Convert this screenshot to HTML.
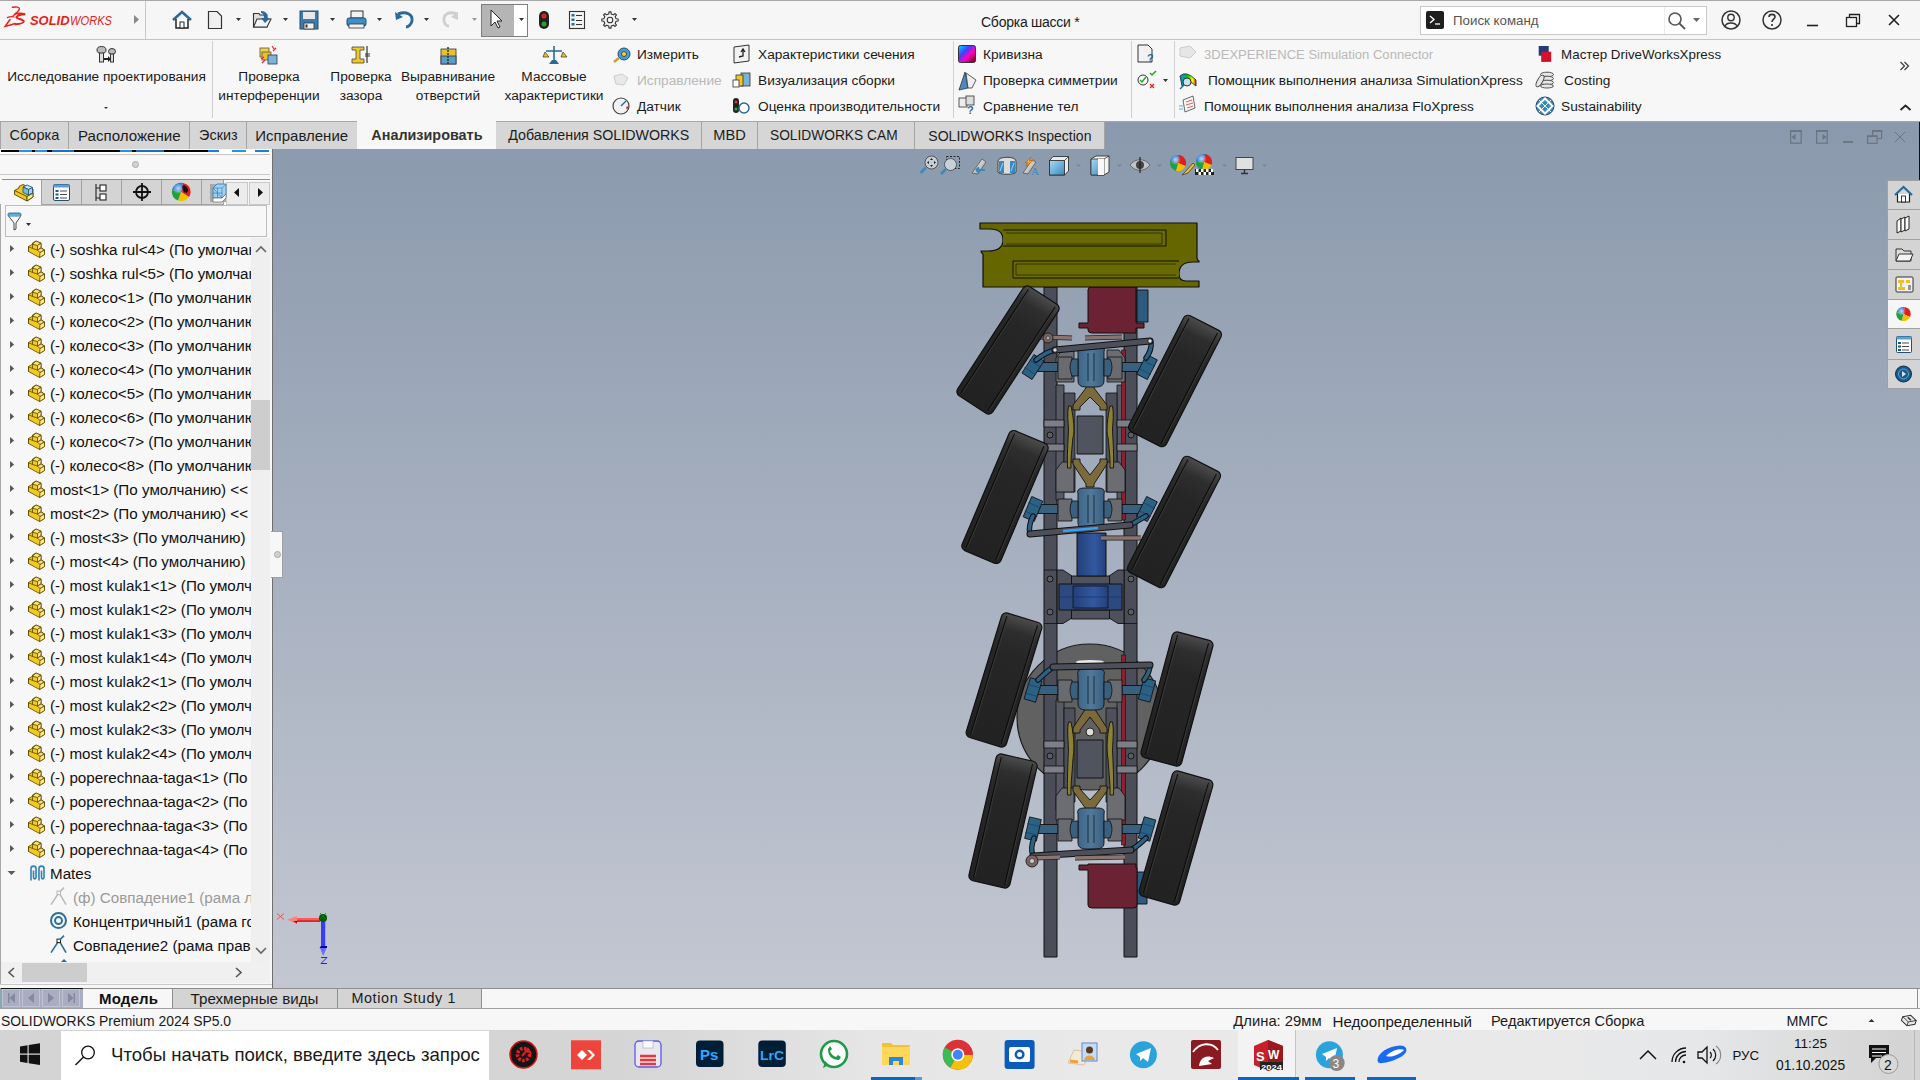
<!DOCTYPE html>
<html><head><meta charset="utf-8">
<style>
*{margin:0;padding:0;box-sizing:border-box}
html,body{width:1920px;height:1080px;overflow:hidden;background:#f7f7f7;font-family:"Liberation Sans",sans-serif;color:#1a1a1a}
.a{position:absolute}
.t{position:absolute;white-space:nowrap;line-height:1}
#titlebar{left:0;top:0;width:1920px;height:40px;background:#f6f6f6;border-top:1px solid #a8a8a8;border-bottom:1px solid #c4c4c4}
#ribbon{left:0;top:40px;width:1920px;height:81px;background:#f7f7f7}
#vp{left:272px;top:121px;width:1648px;height:867px;background:linear-gradient(#8a99ad,#c3c7d2)}
#tabs{left:0;top:121px;height:28px}
.tab{position:absolute;top:0;height:28px;background:#d6d6d6;border:1px solid #a3a3a3;border-bottom:none;font-size:15px;color:#1c1c1c;padding-top:7px;text-align:center}
#panel{left:0;top:149px;width:272px;height:839px;background:#f7f7f7}
#btabs{left:0;top:988px;width:1920px;height:21px;background:#f7f7f7;border-top:1px solid #9a9a9a;border-bottom:1px solid #8c8c8c}
#status{left:0;top:1009px;width:1920px;height:21px;background:#f7f7f7}
#taskbar{left:0;top:1030px;width:1920px;height:50px;background:#d4d4d4}
.rt{font-size:13.7px;color:#1a1a1a}
.tree{font-size:15.4px;color:#111}
</style></head><body>
<div id="titlebar" class="a"></div>
<!-- TITLEBAR CONTENT -->
<div class="a" style="left:145px;top:1px;width:1px;height:38px;background:#c8c8c8"></div>
<svg class="a" style="left:0;top:0" width="150" height="40">
 <g fill="none" stroke="#e2231a" stroke-linecap="round">
  <path d="M12.3 7.2 C16 6.6 19.5 7 19.4 8.6 C19.2 10.5 16 13.5 13.2 15.8" stroke-width="1.4"/>
  <path d="M7.3 17.6 C9.5 16.6 12.5 16.4 14.2 17" stroke-width="1.2"/>
  <path d="M10 19.5 L5.2 26.3 C9 25.5 12.5 24.5 15 23.5" stroke-width="1.5"/>
  <path d="M15.5 13.6 C19 13.2 23 13.4 25.2 14.3 C21 14.6 17.5 15.5 16.5 17 C15.5 18.5 24 19.5 23.8 21.5 C23.6 23.5 19 24 15.5 24.3" stroke-width="1.9"/>
 </g>
 <text x="30" y="24.6" font-family="Liberation Sans" font-weight="bold" font-style="italic" font-size="12.3" fill="#e2231a" textLength="39.5" lengthAdjust="spacingAndGlyphs">SOLID</text>
 <text x="70" y="24.6" font-family="Liberation Sans" font-style="italic" font-size="12.3" fill="#e2231a" textLength="42" lengthAdjust="spacingAndGlyphs">WORKS</text>
 <path d="M134 15 L139 19.5 L134 24 Z" fill="#8a8a8a"/>
</svg>
<svg class="a" style="left:160px;top:0" width="500" height="40">
 <!-- home -->
 <path d="M13 20 L22 12 L31 20" fill="none" stroke="#2a6a98" stroke-width="2.5"/>
 <path d="M16 19 L16 28 L28 28 L28 19" fill="#fff" stroke="#222" stroke-width="1.5"/>
 <rect x="20" y="22" width="4" height="6" fill="#fff" stroke="#222" stroke-width="1"/>
 <!-- new -->
 <path d="M48.5 11.5 L57 11.5 L61.5 16 L61.5 28.5 L48.5 28.5 Z" fill="#f0f0f0" stroke="#333" stroke-width="1.2"/>
 <path d="M76 18 L81 18 L78.5 21 Z" fill="#333"/>
 <!-- open -->
 <path d="M93.5 13.5 L99 13.5 L100 15 L107 15 L107 27 L93.5 27 Z" fill="#ddd" stroke="#333" stroke-width="1.1"/>
 <path d="M93.5 27 L97 19 L111 19 L107 27 Z" fill="#f4f4f4" stroke="#333" stroke-width="1.1"/>
 <path d="M101 11 C106 11 108 14 107 18 L110 18 L105 23 L101 18 L104 18 C104 15 103 13 101 13 Z" fill="#2a6a98"/>
 <path d="M123 18 L128 18 L125.5 21 Z" fill="#333"/>
 <!-- save -->
 <rect x="140" y="11" width="18" height="18" fill="#3c7bab" stroke="#1f4f75" stroke-width="1"/>
 <rect x="143" y="12" width="12" height="7" fill="#e8e8e8"/>
 <rect x="144" y="23" width="10" height="6" fill="#f0f0f0" stroke="#333" stroke-width="0.8"/>
 <rect x="145.5" y="24.5" width="2" height="3" fill="#333"/>
 <path d="M170 18 L175 18 L172.5 21 Z" fill="#333"/>
 <!-- print -->
 <rect x="191" y="11" width="12" height="7" fill="#f2f2f2" stroke="#333" stroke-width="1"/>
 <rect x="187" y="18" width="19" height="8" rx="2" fill="#3c8fc8" stroke="#1f4f75" stroke-width="1"/>
 <rect x="189" y="24" width="15" height="4" fill="#f2f2f2" stroke="#333" stroke-width="0.8"/>
 <path d="M217 18 L222 18 L219.5 21 Z" fill="#333"/>
 <!-- undo -->
 <path d="M238 14 C246 11 253 14 252 21 C251 25 248 27 246 27" fill="none" stroke="#2a6a98" stroke-width="3"/>
 <path d="M235 12 L236 20 L243 17 Z" fill="#2a6a98"/>
 <path d="M264 18 L269 18 L266.5 21 Z" fill="#333"/>
 <!-- redo -->
 <path d="M297 14 C289 11 283 14 284 21 C285 25 287 26 289 26" fill="none" stroke="#cfcfcf" stroke-width="3"/>
 <path d="M298 12 L298 20 L291 17 Z" fill="#cfcfcf"/>
 <path d="M312 18 L317 18 L314.5 21 Z" fill="#999"/>
 <!-- select -->
 <rect x="321.5" y="4.5" width="46" height="32" fill="#fff" stroke="#7e7e7e"/>
 <rect x="322" y="5" width="32" height="31" fill="#b5b5b5"/>
 <path d="M331 10 L331 26 L335 22 L338 28 L340 27 L337 21 L342 21 Z" fill="#fff" stroke="#222" stroke-width="1"/>
 <path d="M359 18 L364 18 L361.5 21 Z" fill="#333"/>
 <!-- traffic -->
 <rect x="379" y="11" width="10" height="18" rx="5" fill="#222"/>
 <circle cx="384" cy="16" r="2.5" fill="#d22"/>
 <circle cx="384" cy="24" r="2.5" fill="#2a2"/>
 <!-- list -->
 <rect x="409.5" y="11.5" width="15" height="17" fill="#f4f4f4" stroke="#333" stroke-width="1.1"/>
 <rect x="411.5" y="14" width="3" height="2.5" fill="#2a6a98"/><rect x="411.5" y="18.5" width="3" height="2.5" fill="#2a6a98"/><rect x="411.5" y="23" width="3" height="2.5" fill="#2a6a98"/>
 <path d="M416 15.5 H422 M416 20.5 H422 M416 24.5 H422" stroke="#333" stroke-width="1"/>
 <!-- gear -->
 <path d="M456.08 18.77 L458.14 19.02 L458.14 20.98 L456.08 21.23 L455.17 23.43 L456.45 25.06 L455.06 26.45 L453.43 25.17 L451.23 26.08 L450.98 28.14 L449.02 28.14 L448.77 26.08 L446.57 25.17 L444.94 26.45 L443.55 25.06 L444.83 23.43 L443.92 21.23 L441.86 20.98 L441.86 19.02 L443.92 18.77 L444.83 16.57 L443.55 14.94 L444.94 13.55 L446.57 14.83 L448.77 13.92 L449.02 11.86 L450.98 11.86 L451.23 13.92 L453.43 14.83 L455.06 13.55 L456.45 14.94 L455.17 16.57 Z" fill="#f6f6f6" stroke="#333" stroke-width="1.1" stroke-linejoin="round"/><circle cx="450" cy="20" r="2.8" fill="#f6f6f6" stroke="#333" stroke-width="1.1"/>
 <path d="M472 18 L477 18 L474.5 21 Z" fill="#333"/>
</svg>
<div class="t" style="left:981px;top:15px;font-size:14px;letter-spacing:-0.25px;color:#1a1a1a">Сборка шасси *</div>
<!-- search box -->
<div class="a" style="left:1420px;top:6px;width:287px;height:29px;background:#fff;border:1px solid #c9c9c9"></div>
<div class="a" style="left:1664px;top:7px;width:1px;height:27px;background:#ececec"></div>
<div class="a" style="left:1426px;top:11px;width:18px;height:18px;background:#1f1f1f;border-radius:2px"></div>
<svg class="a" style="left:1426px;top:11px" width="18" height="18"><path d="M4 5 L8 8.5 L4 12" fill="none" stroke="#fff" stroke-width="1.4"/><path d="M9 13 H14" stroke="#fff" stroke-width="1.3"/></svg>
<div class="t" style="left:1453px;top:14px;font-size:13.3px;color:#555">Поиск команд</div>
<svg class="a" style="left:1660px;top:8px" width="260" height="28">
 <circle cx="15" cy="11" r="6" fill="none" stroke="#555" stroke-width="1.6"/><path d="M19 15 L25 21" stroke="#555" stroke-width="1.8"/>
 <path d="M33 10 L40 10 L36.5 14 Z" fill="#666"/>
 <circle cx="71" cy="12" r="9" fill="none" stroke="#333" stroke-width="1.5"/><circle cx="71" cy="9.5" r="3.2" fill="none" stroke="#333" stroke-width="1.4"/><path d="M65 18 C67 14 75 14 77 18" fill="none" stroke="#333" stroke-width="1.4"/>
 <circle cx="112" cy="12" r="9" fill="none" stroke="#333" stroke-width="1.5"/>
 <path d="M109 9 C109 5.5 115 5.5 115 9 C115 11 112 11.5 112 14" fill="none" stroke="#333" stroke-width="1.6"/><circle cx="112" cy="17" r="1.1" fill="#333"/>
 <path d="M147 17.5 H158" stroke="#222" stroke-width="1.6"/>
 <rect x="186.5" y="9.5" width="10" height="9" fill="none" stroke="#222" stroke-width="1.3"/><path d="M189.5 9.5 V6.5 H199.5 V15.5 H196.5" fill="none" stroke="#222" stroke-width="1.3"/>
 <path d="M229 7 L239 17 M239 7 L229 17" stroke="#222" stroke-width="1.6"/>
</svg>

<div id="ribbon" class="a"></div>
<div class="a" style="left:212px;top:41px;width:1px;height:77px;background:#d0d0d0"></div>
<div class="a" style="left:953px;top:41px;width:1px;height:77px;background:#d0d0d0"></div>
<div class="a" style="left:1131px;top:41px;width:1px;height:77px;background:#d0d0d0"></div>
<div class="a" style="left:1174px;top:41px;width:1px;height:77px;background:#d0d0d0"></div>
<div class="t" style="left:1.5px;top:69.9px;width:210px;text-align:center;font-size:13.7px;color:#1a1a1a">Исследование проектирования</div>
<div class="t" style="left:169.0px;top:69.9px;width:200px;text-align:center;font-size:13.7px;color:#1a1a1a">Проверка</div>
<div class="t" style="left:169.0px;top:88.9px;width:200px;text-align:center;font-size:13.7px;color:#1a1a1a">интерференции</div>
<div class="t" style="left:261.0px;top:69.9px;width:200px;text-align:center;font-size:13.7px;color:#1a1a1a">Проверка</div>
<div class="t" style="left:261.0px;top:88.9px;width:200px;text-align:center;font-size:13.7px;color:#1a1a1a">зазора</div>
<div class="t" style="left:348.0px;top:69.9px;width:200px;text-align:center;font-size:13.7px;color:#1a1a1a">Выравнивание</div>
<div class="t" style="left:348.0px;top:88.9px;width:200px;text-align:center;font-size:13.7px;color:#1a1a1a">отверстий</div>
<div class="t" style="left:454.0px;top:69.9px;width:200px;text-align:center;font-size:13.7px;color:#1a1a1a">Массовые</div>
<div class="t" style="left:454.0px;top:88.9px;width:200px;text-align:center;font-size:13.7px;color:#1a1a1a">характеристики</div>
<div class="t" style="left:637px;top:48.1px;font-size:13.7px;color:#1a1a1a;">Измерить</div>
<div class="t" style="left:637px;top:74.1px;font-size:13.7px;color:#b9b9b9;">Исправление</div>
<div class="t" style="left:637px;top:100.1px;font-size:13.7px;color:#1a1a1a;">Датчик</div>
<div class="t" style="left:758px;top:48.1px;font-size:13.7px;color:#1a1a1a;">Характеристики сечения</div>
<div class="t" style="left:758px;top:74.1px;font-size:13.7px;color:#1a1a1a;">Визуализация сборки</div>
<div class="t" style="left:758px;top:100.1px;font-size:13.7px;color:#1a1a1a;">Оценка производительности</div>
<div class="t" style="left:983px;top:48.1px;font-size:13.7px;color:#1a1a1a;">Кривизна</div>
<div class="t" style="left:983px;top:74.1px;font-size:13.7px;color:#1a1a1a;">Проверка симметрии</div>
<div class="t" style="left:983px;top:100.1px;font-size:13.7px;color:#1a1a1a;">Сравнение тел</div>
<div class="t" style="left:1204px;top:48.1px;font-size:13.05px;color:#b9b9b9;">3DEXPERIENCE Simulation Connector</div>
<div class="t" style="left:1208px;top:74.1px;font-size:13.7px;color:#1a1a1a;">Помощник выполнения анализа SimulationXpress</div>
<div class="t" style="left:1204px;top:100.1px;font-size:13.7px;color:#1a1a1a;">Помощник выполнения анализа FloXpress</div>
<div class="t" style="left:1561px;top:48.1px;font-size:13.35px;color:#1a1a1a;">Мастер DriveWorksXpress</div>
<div class="t" style="left:1564px;top:74.1px;font-size:13.7px;color:#1a1a1a;">Costing</div>
<div class="t" style="left:1561px;top:100.1px;font-size:13.7px;color:#1a1a1a;">Sustainability</div>
<svg class="a" style="left:0;top:40px" width="1920" height="81">
 <!-- design study bolts -->
 <g stroke="#333" stroke-width="1" fill="#bbb">
  <ellipse cx="101.5" cy="10" rx="4.5" ry="3.5"/><rect x="99.5" y="13" width="4" height="9" fill="#ddd"/>
  <ellipse cx="112" cy="11.5" rx="3.5" ry="3"/><rect x="110.5" y="14" width="3" height="8" fill="#ddd"/>
 </g>
 <path d="M104 18 L108 18 L108 16 L111 19 L108 22 L108 20 L104 20 Z" fill="#222"/>
 <path d="M104 67 L108 67 L106 69 Z" fill="#333"/>
 <!-- interference -->
 <rect x="260" y="8" width="9" height="9" fill="#f3d23c" stroke="#555" stroke-width="0.8"/>
 <rect x="262" y="12" width="9" height="8" fill="#e8c22a" stroke="#555" stroke-width="0.8"/>
 <rect x="268" y="15" width="9" height="9" fill="#7ab4d8" stroke="#335" stroke-width="0.8"/>
 <path d="M272 6 L274 9 M276 8 L273 11 M261 19 L264 17 M262 23 L265 20" stroke="#e23" stroke-width="1.2"/>
 <!-- clearance -->
 <path d="M352 7 H364 V10 H360 V19 H364 V23 H352 V19 H356 V10 H352 Z" fill="#f0c820" stroke="#444" stroke-width="0.8"/>
 <path d="M367 6 V23 M365 14 H370 M365 16 H370" stroke="#333" stroke-width="1.2"/>
 <!-- align holes -->
 <rect x="441" y="9" width="15" height="15" fill="#e8c22a" stroke="#333" stroke-width="0.8"/>
 <rect x="441" y="16" width="15" height="8" fill="#5c9cc8" stroke="#333" stroke-width="0.8"/>
 <path d="M448 7 V25" stroke="#333" stroke-width="1.5" stroke-dasharray="2 1"/>
 <!-- mass -->
 <path d="M554 6 V22 M546 11 H562" stroke="#2b6a96" stroke-width="1.6"/>
 <path d="M545 12 L543 17 H549 Z M563 12 L561 17 H567 Z" fill="#e8c22a" stroke="#333" stroke-width="0.7"/>
 <path d="M549 24 H559 L556 20 H552 Z" fill="#2b6a96"/>
 <!-- measure -->
 <circle cx="624" cy="14" r="6" fill="#4b9ad0" stroke="#1e4f75" stroke-width="1"/><circle cx="624" cy="14" r="2.5" fill="#f0d040" stroke="#333" stroke-width="0.8"/>
 <path d="M619 18 L614 22" stroke="#c8a030" stroke-width="2.5"/>
 <!-- repair gray -->
 <path d="M614 36 L622 34 L628 38 L624 45 L616 44 Z" fill="#e8e8e8" stroke="#ccc"/>
 <!-- sensor -->
 <circle cx="621" cy="66" r="8" fill="#f2f2f2" stroke="#444" stroke-width="1.2"/><path d="M621 66 L626 61" stroke="#2b6a96" stroke-width="1.5"/><path d="M626 67 L629 66 L627 70 Z" fill="#d22"/>
 <!-- section props -->
 <path d="M734 7 L749 5 L749 21 L734 23 Z" fill="#f2f2f2" stroke="#333" stroke-width="1"/><path d="M739 17 L743 16 L743 10 M741 12 L743 9 L745 12" fill="none" stroke="#222" stroke-width="1.3"/>
 <!-- asm viz -->
 <rect x="741" y="33" width="9" height="13" fill="#7ab4d8" stroke="#333" stroke-width="0.8"/><rect x="736" y="35" width="7" height="11" fill="#f0c820" stroke="#333" stroke-width="0.8"/><rect x="733" y="40" width="6" height="7" fill="#fff" stroke="#333" stroke-width="0.8"/>
 <!-- perf eval -->
 <rect x="733" y="58" width="6" height="15" rx="3" fill="#222"/><circle cx="736" cy="62" r="1.5" fill="#d33"/><circle cx="736" cy="69" r="1.5" fill="#3a3"/>
 <circle cx="744" cy="68" r="5" fill="#fff" stroke="#2b6a96" stroke-width="1.5"/>
 <!-- curvature -->
 <defs><linearGradient id="rb" x1="0" y1="0" x2="1" y2="1"><stop offset="0" stop-color="#00e0ff"/><stop offset="0.35" stop-color="#4040ff"/><stop offset="0.6" stop-color="#ff00c0"/><stop offset="1" stop-color="#600"/></linearGradient>
 <linearGradient id="rb2" x1="0" y1="0" x2="1" y2="0"><stop offset="0" stop-color="#08f"/><stop offset="0.5" stop-color="#0c0"/><stop offset="0.8" stop-color="#ff0"/><stop offset="1" stop-color="#f00"/></linearGradient></defs>
 <rect x="958.5" y="5.5" width="17" height="17" rx="2" fill="url(#rb)" stroke="#333" stroke-width="1"/>
 <!-- symmetry -->
 <path d="M959 50 L965 32 L968 48 Z" fill="#4a8ac0" stroke="#333" stroke-width="0.8"/><path d="M966 33 L976 40 L972 48 L968 48 Z" fill="#eee" stroke="#333" stroke-width="0.8"/>
 <!-- compare bodies -->
 <rect x="959" y="58" width="8" height="9" fill="#eee" stroke="#333" stroke-width="0.8"/><rect x="966" y="56" width="8" height="9" fill="#ddd" stroke="#333" stroke-width="0.8"/><text x="967" y="74" font-size="11" font-weight="bold" fill="#2b6a96" font-family="Liberation Sans">?</text>
 <!-- col4 -->
 <path d="M1138 5 H1148 L1152 9 V22 H1138 Z" fill="#f2f2f2" stroke="#333" stroke-width="1"/><text x="1147" y="22" font-size="11" font-weight="bold" fill="#2b6a96" font-family="Liberation Sans">?</text>
 <circle cx="1143" cy="40" r="5" fill="none" stroke="#333" stroke-width="1"/><path d="M1140 40 L1142 42 L1146 37" stroke="#2a2" stroke-width="1.5" fill="none"/><path d="M1150 33 L1152 35 L1156 31" stroke="#2a2" stroke-width="1.5" fill="none"/><path d="M1150 44 L1154 48 M1154 44 L1150 48" stroke="#d22" stroke-width="1.3"/>
 <path d="M1163 39 L1168 39 L1165.5 42 Z" fill="#333"/>
 <!-- col5 -->
 <path d="M1180 8 L1190 6 L1196 12 L1190 18 L1180 16 Z" fill="#e6e6e6" stroke="#ccc"/>
 <path d="M1180 36 Q1186 30 1196 40 L1196 46 Q1188 38 1182 46 Z" fill="url(#rb2)" stroke="#222" stroke-width="0.8"/><circle cx="1187" cy="42" r="4" fill="#cde" stroke="#333" stroke-width="1"/><path d="M1184 45 L1180 49" stroke="#2b6a96" stroke-width="1.5"/>
 <path d="M1183 60 L1193 56 L1195 68 L1185 72 Z" fill="#f6f6f6" stroke="#444" stroke-width="0.8"/><path d="M1186 62 L1192 60 M1186 65 L1193 63 M1187 68 L1193 66" stroke="#d33" stroke-width="0.8"/><path d="M1179 66 H1183 M1179 69 H1183" stroke="#3a9ad0" stroke-width="0.8"/>
 <!-- col6 -->
 <rect x="1538.7" y="6" width="10" height="9.7" fill="#253a7a"/><rect x="1541.2" y="11.7" width="10" height="10.2" fill="#d5102a"/>
 <g fill="#e8e8e8" stroke="#444" stroke-width="0.9"><ellipse cx="1547" cy="34.5" rx="6.5" ry="2.3"/><ellipse cx="1547" cy="38.5" rx="6.5" ry="2.3"/><ellipse cx="1547" cy="42.5" rx="6.5" ry="2.3"/><ellipse cx="1547" cy="46" rx="6.5" ry="2"/><ellipse cx="1540" cy="41" rx="2.6" ry="6.5" transform="rotate(30 1540 41)"/></g>
 <circle cx="1545" cy="66" r="9" fill="#3d88b8" stroke="#1a4a6a" stroke-width="1"/><path d="M1545 58.5 L1552.5 66 L1545 73.5 L1537.5 66 Z" fill="none" stroke="#fff" stroke-width="2"/><path d="M1539 60 L1551 72 M1551 60 L1539 72" stroke="#fff" stroke-width="0.9"/>
 <!-- right chevrons -->
 <path d="M1900.5 22 L1904.5 26 L1900.5 30 M1904.5 22 L1908.5 26 L1904.5 30" fill="none" stroke="#333" stroke-width="1.1"/>
 <path d="M1900.5 70 L1905.5 65.5 L1910.5 70" fill="none" stroke="#222" stroke-width="1.7"/>
</svg>

<div id="vp" class="a"></div>
<div class="a" style="left:272px;top:121px;width:1648px;height:867px;background:linear-gradient(#8a99ad,#c3c7d2)"></div>
<div class="a" style="left:272px;top:149px;width:1px;height:839px;background:#6e6e6e"></div>
<div class="a" style="left:1919px;top:122px;width:1px;height:58px;background:#111"></div>
<svg class="a" style="left:272px;top:121px" width="1648" height="867">
 <g transform="translate(-272,-121)">
 <!-- window controls -->
 <g fill="none" stroke="#6b7482" stroke-width="1.2">
  <rect x="1790.6" y="130.8" width="10.6" height="12.4"/><rect x="1816.6" y="130.8" width="10.6" height="12.4"/>
  <rect x="1867.6" y="136" width="9.5" height="7.3"/><path d="M1872.6 135.5 V130.8 H1881.6 V138.5 H1877.5"/>
  <path d="M1895 132 L1905 142 M1905 132 L1895 142" stroke-width="1"/>
 </g>
 <g fill="#6b7482"><rect x="1790" y="130.3" width="11.7" height="1.6"/><rect x="1816" y="130.3" width="11.7" height="1.6"/><rect x="1872" y="130.3" width="10.2" height="1.6"/><rect x="1867" y="135.5" width="10" height="1.6"/>
  <path d="M1795.5 134 L1791.5 137 L1795.5 140 Z"/><path d="M1822.5 134 L1826.5 137 L1822.5 140 Z"/><rect x="1843" y="141" width="10" height="1.8"/></g>
 <!-- triad -->
 <path d="M277 913.5 L284 919.5 M284 913.5 L277 919.5" stroke="#e84848" stroke-width="0.9"/>
 <path d="M296 918 H320 V921.5 H296 Z" fill="#ff5a5a"/><path d="M296 920.5 H320 V921.7 H296 Z" fill="#c00"/>
 <path d="M287 919.8 L297 916 L297 924 Z" fill="#ff8080"/><path d="M293 921 L297 923.5 L297 921 Z" fill="#a00"/>
 <path d="M321 920 H325.2 V947 H321 Z" fill="#3a3aff"/><path d="M321 946 H327 V948 H319.5 Z" fill="#0000a0"/>
 <path d="M320 948 L326.5 948 L323.2 956 Z" fill="#6a6aff"/>
 <circle cx="323" cy="918" r="4" fill="#005a00"/><path d="M320 913 L326 919 M326 913 L320 919" stroke="#0a8a0a" stroke-width="0.8"/>
 <path d="M321 957.5 H327 L321 963.5 H327" fill="none" stroke="#2020ff" stroke-width="1"/>
 </g>
</svg>
<!-- MODEL START -->
<svg class="a" style="left:900px;top:200px" width="360" height="780">
<defs><linearGradient id="tire" x1="0" y1="0" x2="0" y2="1"><stop offset="0" stop-color="#4c4c4c"/><stop offset="0.12" stop-color="#2e2e2e"/><stop offset="0.3" stop-color="#262626"/><stop offset="1" stop-color="#222"/></linearGradient><linearGradient id="motor" x1="0" y1="0" x2="1" y2="0"><stop offset="0" stop-color="#24407a"/><stop offset="0.6" stop-color="#3358a0"/><stop offset="1" stop-color="#24407a"/></linearGradient><linearGradient id="axle" x1="0" y1="0" x2="1" y2="0"><stop offset="0" stop-color="#3d6486"/><stop offset="0.5" stop-color="#50799a"/><stop offset="1" stop-color="#3a5f80"/></linearGradient></defs>
<g transform="translate(-900,-200)" stroke-linejoin="round">
<circle cx="1090" cy="717" r="73" fill="#616161" stroke="#1a1a1a" stroke-width="1.2"/>
<ellipse cx="1090" cy="662" rx="14" ry="2" fill="#e8e8e8"/>
<rect x="1044" y="287" width="13" height="670" fill="#4b4e58" stroke="#101010" stroke-width="1" />
<rect x="1124" y="287" width="13" height="670" fill="#4b4e58" stroke="#101010" stroke-width="1" />
<rect x="1056" y="385" width="8" height="115" fill="#575a64" stroke="#101010" stroke-width="0.8" />
<rect x="1117" y="385" width="8" height="115" fill="#575a64" stroke="#101010" stroke-width="0.8" />
<rect x="1064" y="393" width="11" height="99" fill="#4e515b" stroke="#101010" stroke-width="0.8" />
<rect x="1106" y="393" width="11" height="99" fill="#4e515b" stroke="#101010" stroke-width="0.8" />
<rect x="1056" y="700" width="8" height="110" fill="#575a64" stroke="#101010" stroke-width="0.8" />
<rect x="1117" y="700" width="8" height="110" fill="#575a64" stroke="#101010" stroke-width="0.8" />
<rect x="1064" y="708" width="11" height="94" fill="#4e515b" stroke="#101010" stroke-width="0.8" />
<rect x="1106" y="708" width="11" height="94" fill="#4e515b" stroke="#101010" stroke-width="0.8" />
<rect x="1121.5" y="350" width="4.0" height="170" fill="#8a2030" stroke="#101010" stroke-width="0.6" />
<rect x="1121.5" y="655" width="4.0" height="190" fill="#8a2030" stroke="#101010" stroke-width="0.6" />
<rect x="1044" y="420" width="20" height="7" fill="#7c7f88" stroke="#101010" stroke-width="0.8" />
<rect x="1117" y="420" width="20" height="7" fill="#7c7f88" stroke="#101010" stroke-width="0.8" />
<rect x="1044" y="444" width="20" height="7" fill="#7c7f88" stroke="#101010" stroke-width="0.8" />
<rect x="1117" y="444" width="20" height="7" fill="#7c7f88" stroke="#101010" stroke-width="0.8" />
<rect x="1044" y="741" width="20" height="7" fill="#7c7f88" stroke="#101010" stroke-width="0.8" />
<rect x="1117" y="741" width="20" height="7" fill="#7c7f88" stroke="#101010" stroke-width="0.8" />
<rect x="1044" y="766" width="20" height="7" fill="#7c7f88" stroke="#101010" stroke-width="0.8" />
<rect x="1117" y="766" width="20" height="7" fill="#7c7f88" stroke="#101010" stroke-width="0.8" />
<circle cx="1050" cy="435" r="3" fill="#5a5d66" stroke="#101010" stroke-width="0.9"/>
<circle cx="1131" cy="435" r="3" fill="#5a5d66" stroke="#101010" stroke-width="0.9"/>
<circle cx="1050" cy="756" r="3" fill="#5a5d66" stroke="#101010" stroke-width="0.9"/>
<circle cx="1131" cy="756" r="3" fill="#5a5d66" stroke="#101010" stroke-width="0.9"/>
<circle cx="1050" cy="579" r="3" fill="#5a5d66" stroke="#101010" stroke-width="0.9"/>
<circle cx="1131" cy="579" r="3" fill="#5a5d66" stroke="#101010" stroke-width="0.9"/>
<circle cx="1050" cy="612" r="3" fill="#5a5d66" stroke="#101010" stroke-width="0.9"/>
<circle cx="1131" cy="612" r="3" fill="#5a5d66" stroke="#101010" stroke-width="0.9"/>
<rect x="1077" y="416" width="26" height="38" fill="#50545f" stroke="#101010" stroke-width="1" />
<rect x="1077" y="740" width="26" height="38" fill="#50545f" stroke="#101010" stroke-width="1" />
<path d="M1056 492 L1056 470 L1062 462 L1074 462 L1074 492 Z" fill="#6c6d73" stroke="#101010" stroke-width="0.8"/>
<path d="M1125 492 L1125 470 L1119 462 L1107 462 L1107 492 Z" fill="#6c6d73" stroke="#101010" stroke-width="0.8"/>
<path d="M1056 382 L1056 358 L1062 350 L1074 350 L1074 382 Z" fill="#6c6d73" stroke="#101010" stroke-width="0.8"/>
<path d="M1125 382 L1125 358 L1119 350 L1107 350 L1107 382 Z" fill="#6c6d73" stroke="#101010" stroke-width="0.8"/>
<path d="M1056 820 L1056 796 L1062 788 L1074 788 L1074 820 Z" fill="#6c6d73" stroke="#101010" stroke-width="0.8"/>
<path d="M1125 820 L1125 796 L1119 788 L1107 788 L1107 820 Z" fill="#6c6d73" stroke="#101010" stroke-width="0.8"/>
<path d="M1057 570 L1063 570 L1072 576 L1072 618 L1063 623.5 L1057 623.5 Z" fill="#4e515b" stroke="#101010" stroke-width="0.9"/>
<path d="M1124 570 L1118 570 L1109 576 L1109 618 L1118 623.5 L1124 623.5 Z" fill="#4e515b" stroke="#101010" stroke-width="0.9"/>
<rect x="1071.5" y="576" width="38.0" height="9.5" fill="#50535d" stroke="#101010" stroke-width="0.9" />
<rect x="1071.5" y="610" width="38.0" height="9" fill="#50535d" stroke="#101010" stroke-width="0.9" />
<path d="M1044 570 L1057 570" stroke="#101010" stroke-width="0.8" fill="none"/>
<path d="M1124 570 L1137 570" stroke="#101010" stroke-width="0.8" fill="none"/>
<path d="M1044 623.5 L1057 623.5" stroke="#101010" stroke-width="0.8" fill="none"/>
<path d="M1124 623.5 L1137 623.5" stroke="#101010" stroke-width="0.8" fill="none"/>
<rect x="1077" y="533" width="29" height="43" fill="url(#motor)" stroke="#101010" stroke-width="1" />
<rect x="1059" y="584" width="63" height="26" fill="#2c4a80" stroke="#101010" stroke-width="1" />
<rect x="1073" y="586" width="35" height="22" fill="url(#motor)" stroke="#101010" stroke-width="0.8" />
<path d="M1059 597 L1122 597" stroke="#1a2a50" stroke-width="0.6" fill="none"/>
<path d="M1068.5 406 L1071 406 C1075 424 1074 436 1073 437.0 C1072 448 1070.5 460 1071 468 L1067.5 468 C1067 448 1068.5 436 1068.5 429.0 C1068 421 1067 414 1068.5 406 Z" fill="#8c8232" stroke="#101010" stroke-width="0.9"/>
<path d="M1112.5 406 L1110 406 C1106 424 1107 436 1108 437.0 C1109 448 1110.5 460 1110 468 L1113.5 468 C1114 448 1112.5 436 1112.5 429.0 C1113 421 1114 414 1112.5 406 Z" fill="#8c8232" stroke="#101010" stroke-width="0.9"/>
<path d="M1068.5 722 L1071 722 C1075 740 1074 752 1073 758.5 C1072 775 1070.5 787 1071 795 L1067.5 795 C1067 775 1068.5 752 1068.5 750.5 C1068 737 1067 730 1068.5 722 Z" fill="#8c8232" stroke="#101010" stroke-width="0.9"/>
<path d="M1112.5 722 L1110 722 C1106 740 1107 752 1108 758.5 C1109 775 1110.5 787 1110 795 L1113.5 795 C1114 775 1112.5 752 1112.5 750.5 C1113 737 1114 730 1112.5 722 Z" fill="#8c8232" stroke="#101010" stroke-width="0.9"/>
<path d="M1073 459 L1080 459 L1080 462 L1090 475 L1100 462 L1100 459 L1107 459 L1107 464 L1094 484 L1094 487 L1086 487 L1086 484 L1073 464 Z" fill="#7c6a3c" stroke="#101010" stroke-width="0.9"/>
<path d="M1073 410 L1080 410 L1080 407 L1090 397 L1100 407 L1100 410 L1107 410 L1107 405 L1094 388 L1094 385 L1086 385 L1086 388 L1073 405 Z" fill="#7c6a3c" stroke="#101010" stroke-width="0.9"/>
<path d="M1073 733 L1080 733 L1080 730 L1090 717 L1100 730 L1100 733 L1107 733 L1107 728 L1094 708 L1094 705 L1086 705 L1086 708 L1073 728 Z" fill="#7c6a3c" stroke="#101010" stroke-width="0.9"/>
<path d="M1073 786 L1080 786 L1080 789 L1090 800 L1100 789 L1100 786 L1107 786 L1107 791 L1094 809 L1094 812 L1086 812 L1086 809 L1073 791 Z" fill="#7c6a3c" stroke="#101010" stroke-width="0.9"/>
<circle cx="1090" cy="732" r="4" fill="#ddd" stroke="#222" stroke-width="1"/>
<rect x="1030" y="362.5" width="28" height="9.0" fill="#3a6080" stroke="#101010" stroke-width="0.9" />
<rect x="1122" y="362.5" width="28" height="9.0" fill="#3a6080" stroke="#101010" stroke-width="0.9" />
<circle cx="1035" cy="367" r="2" fill="none" stroke="#101010" stroke-width="0.7"/>
<circle cx="1145" cy="367" r="2" fill="none" stroke="#101010" stroke-width="0.7"/>
<g transform="translate(1033,367) rotate(33)"><rect x="-6" y="-11" width="12" height="22" fill="#2c6186" stroke="#101010" stroke-width="0.8"/><path d="M-7 -4 H7 M-7 5 H7" stroke="#1a3a55" stroke-width="0.6"/></g>
<g transform="translate(1147,367) rotate(27)"><rect x="-6" y="-11" width="12" height="22" fill="#2c6186" stroke="#101010" stroke-width="0.8"/><path d="M-7 -4 H7 M-7 5 H7" stroke="#1a3a55" stroke-width="0.6"/></g>
<rect x="1058" y="357" width="14" height="22" fill="#6a6b70" stroke="#101010" stroke-width="0.8" />
<rect x="1108" y="357" width="14" height="22" fill="#6a6b70" stroke="#101010" stroke-width="0.8" />
<path d="M1078 352 Q1076 346 1084 346 H1098 Q1106 346 1104 352 V381 Q1104 387 1096 387 H1086 Q1078 387 1078 381 Z" fill="url(#axle)" stroke="#101010" stroke-width="0.9"/>
<path d="M1072 359 Q1068 367 1072 376 H1078 V359 Z M1110 359 Q1114 367 1110 376 H1104 V359 Z" fill="#3a6080" stroke="#101010" stroke-width="0.8"/>
<path d="M1088 353 L1088 381" stroke="#101010" stroke-width="0.7" fill="none"/>
<path d="M1094 353 L1094 381" stroke="#101010" stroke-width="0.7" fill="none"/>
<rect x="1030" y="504.5" width="28" height="9.0" fill="#3a6080" stroke="#101010" stroke-width="0.9" />
<rect x="1122" y="504.5" width="28" height="9.0" fill="#3a6080" stroke="#101010" stroke-width="0.9" />
<circle cx="1035" cy="509" r="2" fill="none" stroke="#101010" stroke-width="0.7"/>
<circle cx="1145" cy="509" r="2" fill="none" stroke="#101010" stroke-width="0.7"/>
<g transform="translate(1033,509) rotate(23)"><rect x="-6" y="-11" width="12" height="22" fill="#2c6186" stroke="#101010" stroke-width="0.8"/><path d="M-7 -4 H7 M-7 5 H7" stroke="#1a3a55" stroke-width="0.6"/></g>
<g transform="translate(1147,509) rotate(27)"><rect x="-6" y="-11" width="12" height="22" fill="#2c6186" stroke="#101010" stroke-width="0.8"/><path d="M-7 -4 H7 M-7 5 H7" stroke="#1a3a55" stroke-width="0.6"/></g>
<rect x="1058" y="499" width="14" height="22" fill="#6a6b70" stroke="#101010" stroke-width="0.8" />
<rect x="1108" y="499" width="14" height="22" fill="#6a6b70" stroke="#101010" stroke-width="0.8" />
<path d="M1078 494 Q1076 488 1084 488 H1098 Q1106 488 1104 494 V523 Q1104 529 1096 529 H1086 Q1078 529 1078 523 Z" fill="url(#axle)" stroke="#101010" stroke-width="0.9"/>
<path d="M1072 501 Q1068 509 1072 518 H1078 V501 Z M1110 501 Q1114 509 1110 518 H1104 V501 Z" fill="#3a6080" stroke="#101010" stroke-width="0.8"/>
<path d="M1088 495 L1088 523" stroke="#101010" stroke-width="0.7" fill="none"/>
<path d="M1094 495 L1094 523" stroke="#101010" stroke-width="0.7" fill="none"/>
<rect x="1030" y="685.5" width="28" height="9.0" fill="#3a6080" stroke="#101010" stroke-width="0.9" />
<rect x="1122" y="685.5" width="28" height="9.0" fill="#3a6080" stroke="#101010" stroke-width="0.9" />
<circle cx="1035" cy="690" r="2" fill="none" stroke="#101010" stroke-width="0.7"/>
<circle cx="1145" cy="690" r="2" fill="none" stroke="#101010" stroke-width="0.7"/>
<g transform="translate(1033,690) rotate(17)"><rect x="-6" y="-11" width="12" height="22" fill="#2c6186" stroke="#101010" stroke-width="0.8"/><path d="M-7 -4 H7 M-7 5 H7" stroke="#1a3a55" stroke-width="0.6"/></g>
<g transform="translate(1147,690) rotate(15)"><rect x="-6" y="-11" width="12" height="22" fill="#2c6186" stroke="#101010" stroke-width="0.8"/><path d="M-7 -4 H7 M-7 5 H7" stroke="#1a3a55" stroke-width="0.6"/></g>
<rect x="1058" y="680" width="14" height="22" fill="#6a6b70" stroke="#101010" stroke-width="0.8" />
<rect x="1108" y="680" width="14" height="22" fill="#6a6b70" stroke="#101010" stroke-width="0.8" />
<path d="M1078 675 Q1076 669 1084 669 H1098 Q1106 669 1104 675 V704 Q1104 710 1096 710 H1086 Q1078 710 1078 704 Z" fill="url(#axle)" stroke="#101010" stroke-width="0.9"/>
<path d="M1072 682 Q1068 690 1072 699 H1078 V682 Z M1110 682 Q1114 690 1110 699 H1104 V682 Z" fill="#3a6080" stroke="#101010" stroke-width="0.8"/>
<path d="M1088 676 L1088 704" stroke="#101010" stroke-width="0.7" fill="none"/>
<path d="M1094 676 L1094 704" stroke="#101010" stroke-width="0.7" fill="none"/>
<rect x="1030" y="824.5" width="28" height="9.0" fill="#3a6080" stroke="#101010" stroke-width="0.9" />
<rect x="1122" y="824.5" width="28" height="9.0" fill="#3a6080" stroke="#101010" stroke-width="0.9" />
<circle cx="1035" cy="829" r="2" fill="none" stroke="#101010" stroke-width="0.7"/>
<circle cx="1145" cy="829" r="2" fill="none" stroke="#101010" stroke-width="0.7"/>
<g transform="translate(1033,829) rotate(13)"><rect x="-6" y="-11" width="12" height="22" fill="#2c6186" stroke="#101010" stroke-width="0.8"/><path d="M-7 -4 H7 M-7 5 H7" stroke="#1a3a55" stroke-width="0.6"/></g>
<g transform="translate(1147,829) rotate(16)"><rect x="-6" y="-11" width="12" height="22" fill="#2c6186" stroke="#101010" stroke-width="0.8"/><path d="M-7 -4 H7 M-7 5 H7" stroke="#1a3a55" stroke-width="0.6"/></g>
<rect x="1058" y="819" width="14" height="22" fill="#6a6b70" stroke="#101010" stroke-width="0.8" />
<rect x="1108" y="819" width="14" height="22" fill="#6a6b70" stroke="#101010" stroke-width="0.8" />
<path d="M1078 814 Q1076 808 1084 808 H1098 Q1106 808 1104 814 V843 Q1104 849 1096 849 H1086 Q1078 849 1078 843 Z" fill="url(#axle)" stroke="#101010" stroke-width="0.9"/>
<path d="M1072 821 Q1068 829 1072 838 H1078 V821 Z M1110 821 Q1114 829 1110 838 H1104 V821 Z" fill="#3a6080" stroke="#101010" stroke-width="0.8"/>
<path d="M1088 815 L1088 843" stroke="#101010" stroke-width="0.7" fill="none"/>
<path d="M1094 815 L1094 843" stroke="#101010" stroke-width="0.7" fill="none"/>
<path d="M1036 360 Q1046 352 1055 350" stroke="#101010" stroke-width="5.5" fill="none" stroke-linecap="round"/>
<path d="M1036 360 Q1046 352 1055 350" stroke="#2c6186" stroke-width="3.5" fill="none" stroke-linecap="round"/>
<path d="M1146 358 Q1152 350 1151 342" stroke="#101010" stroke-width="5.5" fill="none" stroke-linecap="round"/>
<path d="M1146 358 Q1152 350 1151 342" stroke="#2c6186" stroke-width="3.5" fill="none" stroke-linecap="round"/>
<path d="M1033 516 Q1028 526 1030 534" stroke="#101010" stroke-width="5.5" fill="none" stroke-linecap="round"/>
<path d="M1033 516 Q1028 526 1030 534" stroke="#2c6186" stroke-width="3.5" fill="none" stroke-linecap="round"/>
<path d="M1146 516 Q1136 522 1130 525" stroke="#101010" stroke-width="5.5" fill="none" stroke-linecap="round"/>
<path d="M1146 516 Q1136 522 1130 525" stroke="#2c6186" stroke-width="3.5" fill="none" stroke-linecap="round"/>
<path d="M1038 680 Q1046 672 1053 667" stroke="#101010" stroke-width="5.5" fill="none" stroke-linecap="round"/>
<path d="M1038 680 Q1046 672 1053 667" stroke="#2c6186" stroke-width="3.5" fill="none" stroke-linecap="round"/>
<path d="M1144 680 Q1150 672 1150 665" stroke="#101010" stroke-width="5.5" fill="none" stroke-linecap="round"/>
<path d="M1144 680 Q1150 672 1150 665" stroke="#2c6186" stroke-width="3.5" fill="none" stroke-linecap="round"/>
<path d="M1034 838 Q1030 848 1033 856" stroke="#101010" stroke-width="5.5" fill="none" stroke-linecap="round"/>
<path d="M1034 838 Q1030 848 1033 856" stroke="#2c6186" stroke-width="3.5" fill="none" stroke-linecap="round"/>
<path d="M1146 838 Q1138 846 1131 850" stroke="#101010" stroke-width="5.5" fill="none" stroke-linecap="round"/>
<path d="M1146 838 Q1138 846 1131 850" stroke="#2c6186" stroke-width="3.5" fill="none" stroke-linecap="round"/>
<path d="M1055 350 L1150 341" stroke="#101010" stroke-width="7" stroke-linecap="round"/>
<path d="M1055 350 L1150 341" stroke="#4d505a" stroke-width="5" stroke-linecap="round"/>
<circle cx="1055" cy="350" r="2.2" fill="#ddd" stroke="#101010" stroke-width="0.8"/>
<circle cx="1150" cy="341" r="2.2" fill="#ddd" stroke="#101010" stroke-width="0.8"/>
<path d="M1030 534 L1130 525" stroke="#101010" stroke-width="7" stroke-linecap="round"/>
<path d="M1030 534 L1130 525" stroke="#4d505a" stroke-width="5" stroke-linecap="round"/>
<path d="M1063 531 L1098 528" stroke="#3aa0f0" stroke-width="2.5"/>
<path d="M1053 667 L1150 665" stroke="#101010" stroke-width="7" stroke-linecap="round"/>
<path d="M1053 667 L1150 665" stroke="#4d505a" stroke-width="5" stroke-linecap="round"/>
<path d="M1033 856 L1131 850" stroke="#101010" stroke-width="7" stroke-linecap="round"/>
<path d="M1033 856 L1131 850" stroke="#4d505a" stroke-width="5" stroke-linecap="round"/>
<path d="M1040 337 L1072 338" stroke="#222" stroke-width="5"/>
<path d="M1040 337 L1072 338" stroke="#8a7470" stroke-width="3.5"/>
<path d="M1085 338 L1122 337" stroke="#222" stroke-width="5"/>
<path d="M1085 338 L1122 337" stroke="#8a7470" stroke-width="3.5"/>
<path d="M1101 538 L1141 538" stroke="#222" stroke-width="5"/>
<path d="M1101 538 L1141 538" stroke="#8a7470" stroke-width="3.5"/>
<path d="M1033 858 L1060 857" stroke="#222" stroke-width="5"/>
<path d="M1033 858 L1060 857" stroke="#8a7470" stroke-width="3.5"/>
<path d="M1075 858 L1125 857" stroke="#222" stroke-width="5"/>
<path d="M1075 858 L1125 857" stroke="#8a7470" stroke-width="3.5"/>
<circle cx="1048" cy="338" r="5" fill="#7a6460" stroke="#222" stroke-width="1"/>
<circle cx="1048" cy="338" r="2" fill="#aaa" stroke="#222" stroke-width="0.6"/>
<circle cx="1032" cy="861" r="6" fill="#7a6460" stroke="#222" stroke-width="1"/>
<circle cx="1032" cy="861" r="2.5" fill="#ccc" stroke="#222" stroke-width="0.6"/>
<rect x="1137" y="290" width="11" height="32" fill="#2e5a80" stroke="#101010" stroke-width="0.9" />
<rect x="1137" y="872" width="10" height="32" fill="#2e5a80" stroke="#101010" stroke-width="0.9" />
<path d="M1088 290 Q1088 287 1091 287 H1136 V323 H1144 V328 H1136 V333 H1092 Q1088 333 1088 330 V328 H1079 V323 H1088 Z" fill="#6b2232" stroke="#101010" stroke-width="1"/>
<path d="M1088 864 H1136 V868 H1137 V905 Q1137 908 1133 908 H1092 Q1088 908 1088 905 V870 H1079 V865 H1088 Z" fill="#6b2232" stroke="#101010" stroke-width="1"/>
<path d="M980 223 H1197 V258 Q1197 260 1199 261 V262 L1193 262 Q1179 262 1179 274 Q1179 281 1186 281 H1199 V287 H983 V254 Q981 253 981 251 H988 Q1003 251 1003 240 Q1003 229 990 229 H980 Z" fill="#666600" stroke="#101010" stroke-width="1.2"/>
<path d="M1003 230 H1166 V246 H1003" fill="#6a6a04" stroke="#101010" stroke-width="1"/>
<path d="M1006 233 H1162 V244 H1006" fill="none" stroke="#2a2a00" stroke-width="0.8"/>
<path d="M1179 261 H1013 V278 H1179" fill="#6a6a04" stroke="#101010" stroke-width="1"/>
<path d="M1176 264 H1016 V275 H1176" fill="none" stroke="#2a2a00" stroke-width="0.8"/>
<g transform="translate(1008,350) rotate(33)">
<rect x="-21.0" y="-65.0" width="42" height="130" rx="5" fill="url(#tire)" stroke="#101010" stroke-width="1.2"/>
<path d="M-16.0 -62.0 V62.0 M16.0 -62.0 V62.0" stroke="#0a0a0a" stroke-width="1"/>
<path d="M-14.8 -61.0 V61.0 M17.2 -61.0 V61.0" stroke="#3a3a3a" stroke-width="0.8"/>
</g>
<g transform="translate(1175,381) rotate(27)">
<rect x="-21.0" y="-65.0" width="42" height="130" rx="5" fill="url(#tire)" stroke="#101010" stroke-width="1.2"/>
<path d="M-16.0 -62.0 V62.0 M16.0 -62.0 V62.0" stroke="#0a0a0a" stroke-width="1"/>
<path d="M-14.8 -61.0 V61.0 M17.2 -61.0 V61.0" stroke="#3a3a3a" stroke-width="0.8"/>
</g>
<g transform="translate(1005,497) rotate(23)">
<rect x="-21.0" y="-65.0" width="42" height="130" rx="5" fill="url(#tire)" stroke="#101010" stroke-width="1.2"/>
<path d="M-16.0 -62.0 V62.0 M16.0 -62.0 V62.0" stroke="#0a0a0a" stroke-width="1"/>
<path d="M-14.8 -61.0 V61.0 M17.2 -61.0 V61.0" stroke="#3a3a3a" stroke-width="0.8"/>
</g>
<g transform="translate(1174,522) rotate(27)">
<rect x="-21.0" y="-65.0" width="42" height="130" rx="5" fill="url(#tire)" stroke="#101010" stroke-width="1.2"/>
<path d="M-16.0 -62.0 V62.0 M16.0 -62.0 V62.0" stroke="#0a0a0a" stroke-width="1"/>
<path d="M-14.8 -61.0 V61.0 M17.2 -61.0 V61.0" stroke="#3a3a3a" stroke-width="0.8"/>
</g>
<g transform="translate(1004,680) rotate(17)">
<rect x="-21.0" y="-65.0" width="42" height="130" rx="5" fill="url(#tire)" stroke="#101010" stroke-width="1.2"/>
<path d="M-16.0 -62.0 V62.0 M16.0 -62.0 V62.0" stroke="#0a0a0a" stroke-width="1"/>
<path d="M-14.8 -61.0 V61.0 M17.2 -61.0 V61.0" stroke="#3a3a3a" stroke-width="0.8"/>
</g>
<g transform="translate(1177,699) rotate(15)">
<rect x="-21.0" y="-65.0" width="42" height="130" rx="5" fill="url(#tire)" stroke="#101010" stroke-width="1.2"/>
<path d="M-16.0 -62.0 V62.0 M16.0 -62.0 V62.0" stroke="#0a0a0a" stroke-width="1"/>
<path d="M-14.8 -61.0 V61.0 M17.2 -61.0 V61.0" stroke="#3a3a3a" stroke-width="0.8"/>
</g>
<g transform="translate(1003,821) rotate(13)">
<rect x="-21.0" y="-65.0" width="42" height="130" rx="5" fill="url(#tire)" stroke="#101010" stroke-width="1.2"/>
<path d="M-16.0 -62.0 V62.0 M16.0 -62.0 V62.0" stroke="#0a0a0a" stroke-width="1"/>
<path d="M-14.8 -61.0 V61.0 M17.2 -61.0 V61.0" stroke="#3a3a3a" stroke-width="0.8"/>
</g>
<g transform="translate(1176,838) rotate(16)">
<rect x="-21.0" y="-65.0" width="42" height="130" rx="5" fill="url(#tire)" stroke="#101010" stroke-width="1.2"/>
<path d="M-16.0 -62.0 V62.0 M16.0 -62.0 V62.0" stroke="#0a0a0a" stroke-width="1"/>
<path d="M-14.8 -61.0 V61.0 M17.2 -61.0 V61.0" stroke="#3a3a3a" stroke-width="0.8"/>
</g>
</g></svg>
<!-- MODEL END -->
<!-- HUD toolbar -->
<svg class="a" style="left:910px;top:150px" width="370" height="30">
 <defs><linearGradient id="silv" x1="0" y1="0" x2="1" y2="1"><stop offset="0" stop-color="#fafafa"/><stop offset="1" stop-color="#9a9a9a"/></linearGradient>
 <linearGradient id="bluec" x1="0" y1="0" x2="1" y2="1"><stop offset="0" stop-color="#a8d8f8"/><stop offset="1" stop-color="#3a8ac0"/></linearGradient></defs>
 <!-- zoom fit -->
 <circle cx="21.5" cy="12.5" r="6.5" fill="#c8ccd4" stroke="#555" stroke-width="1"/><path d="M16 17.5 L10.5 23" stroke="#3a8ac0" stroke-width="2.6"/>
 <path d="M21.5 8 L20 10 H23 Z M21.5 17 L20 15 H23 Z M17 12.5 L19 11 V14 Z M26 12.5 L24 11 V14 Z" fill="#222"/>
 <!-- zoom area -->
 <rect x="36.5" y="6.5" width="13" height="12" fill="none" stroke="#222" stroke-width="1" stroke-dasharray="2 1.5"/><circle cx="40.5" cy="14.5" r="6" fill="#c8d0d8" stroke="#555" stroke-width="1"/><path d="M36 19 L31 24" stroke="#3a8ac0" stroke-width="2.6"/>
 <!-- previous view -->
 <path d="M62 23 L72 9 L76 12 L68 24 Z" fill="url(#silv)" stroke="#555" stroke-width="0.8"/><path d="M66 20 H75 M66 20 L69 17.5 M66 20 L69 22.5" stroke="#3a8ac0" stroke-width="2.2" fill="none"/>
 <!-- section -->
 <path d="M88 11 C88 6 106 6 106 11 V22 C106 25 88 25 88 22 Z" fill="#dcdcdc" stroke="#333" stroke-width="0.9"/><rect x="89" y="11" width="5" height="12" fill="#3a8ac0"/><rect x="100" y="11" width="5" height="12" fill="#3a8ac0"/><path d="M90 21 L93 13 M101 21 L104 13" stroke="#cde" stroke-width="0.8"/>
 <!-- dynamic annotation -->
 <path d="M113 23 L122 10 L126 12 L118 24 Z" fill="url(#silv)" stroke="#555" stroke-width="0.8"/><path d="M115 13 L121 7 L119 11 L124 10 L116 16 L118 12 Z" fill="#f0c020" stroke="#d05010" stroke-width="0.6"/><text x="121" y="25" font-family="Liberation Serif" font-size="11" fill="#3a8ac0">A</text>
 <!-- view orientation -->
 <path d="M139.5 10.5 L143 6.5 H158.5 V21 L154.5 25 H139.5 Z" fill="#e8ecf0" stroke="#333" stroke-width="0.9"/><rect x="139.5" y="10.5" width="15" height="14.5" fill="url(#bluec)" stroke="#333" stroke-width="0.9"/><path d="M154.5 10.5 L158.5 6.5" stroke="#333" stroke-width="0.8"/>
 <path d="M166 14.5 L171 14.5 L168.5 17 Z" fill="#7a8598"/>
 <!-- display style -->
 <path d="M181 9 L186 6 H199 V22 L194 25 H181 Z" fill="#f5f5f5" stroke="#333" stroke-width="0.9"/><path d="M181 9 H194 V25 H181 Z" fill="url(#bluec)" stroke="#333" stroke-width="0.8"/><path d="M188 9 H194 V25 H188 Z" fill="#f8f8f8"/><path d="M194 9 L199 6" stroke="#333" stroke-width="0.8"/>
 <path d="M207 14.5 L212 14.5 L209.5 17 Z" fill="#7a8598"/>
 <!-- hide/show eye -->
 <path d="M220 15 C225 8 235 8 240 15 C235 22 225 22 220 15 Z" fill="#c0c4c8" stroke="#555" stroke-width="0.8"/><circle cx="230" cy="15" r="4" fill="#444"/><path d="M230 7 V23" stroke="#222" stroke-width="1.2"/>
 <path d="M247 14.5 L252 14.5 L249.5 17 Z" fill="#7a8598"/>
 <!-- edit appearance -->
 <g transform="translate(268,13)"><path d="M0 0 L-8 -1 A8 8 0 0 1 1 -8 Z" fill="#2f78d8"/><path d="M0 0 L1 -8 A8 8 0 0 1 7.5 3 Z" fill="#e02020"/><path d="M0 0 L7.5 3 A8 8 0 0 1 -2 7.8 Z" fill="#f0c000"/><path d="M0 0 L-2 7.8 A8 8 0 0 1 -8 -1 Z" fill="#20a040"/><circle r="8" fill="url(#ball)"/></g>
 <path d="M272 25 L276 21 L283 13 L285 15 L278 23 Z" fill="#f0c020" stroke="#333" stroke-width="0.7"/>
 <!-- scenes -->
 <g transform="translate(294,12)"><path d="M0 0 L-8 -1 A8 8 0 0 1 1 -8 Z" fill="#2f78d8"/><path d="M0 0 L1 -8 A8 8 0 0 1 7.5 3 Z" fill="#e02020"/><path d="M0 0 L7.5 3 A8 8 0 0 1 -2 7.8 Z" fill="#f0c000"/><path d="M0 0 L-2 7.8 A8 8 0 0 1 -8 -1 Z" fill="#20a040"/><circle r="8" fill="url(#ball)"/></g>
 <rect x="285" y="19" width="19" height="6" fill="#222"/><path d="M286 19 h2.5 v3 h-2.5 Z M291 19 h2.5 v3 h-2.5 Z M296 19 h2.5 v3 h-2.5 Z M301 19 h2.5 v3 h-2.5 Z M288.5 22 h2.5 v3 h-2.5 Z M293.5 22 h2.5 v3 h-2.5 Z M298.5 22 h2.5 v3 h-2.5 Z" fill="#fff"/>
 <path d="M312 14.5 L317 14.5 L314.5 17 Z" fill="#7a8598"/>
 <!-- display -->
 <rect x="326" y="7.5" width="17" height="12" fill="#e0e0e0" stroke="#444" stroke-width="1"/><path d="M334.5 19.5 V23 M331 23.5 H338" stroke="#333" stroke-width="1.4"/>
 <path d="M352 14.5 L357 14.5 L354.5 17 Z" fill="#7a8598"/>
</svg>
<!-- task pane -->
<div class="a" style="left:1887px;top:180px;width:33px;height:209px;background:#d4d4d4;border:1px solid #a0a0a0;border-right:none"></div>
<div class="a" style="left:1888px;top:299px;width:32px;height:29px;background:#f6f6f6"></div>
<svg class="a" style="left:1887px;top:180px" width="33" height="210">
 <g fill="none" stroke="#a0a0a0" stroke-width="1"><path d="M0 29.5 H33 M0 59.5 H33 M0 89.5 H33 M0 119.5 H33 M0 148.5 H33 M0 179.5 H33"/></g>
 <!-- home -->
 <path d="M8 15 L16.5 7 L25 15" fill="none" stroke="#2a6a98" stroke-width="2.2"/><path d="M10.5 14 V22 H22.5 V14" fill="#fff" stroke="#222" stroke-width="1.2"/><rect x="14.5" y="16" width="4" height="6" fill="#fff" stroke="#222" stroke-width="0.9"/>
 <!-- library -->
 <g fill="#fff" stroke="#222" stroke-width="1"><path d="M10 41 L14 38 V51 L10 53 Z"/><path d="M14 39 L18 37 V50 L14 52 Z"/><path d="M18 38 L22 36 V49 L18 51 Z"/></g>
 <!-- folder -->
 <path d="M9 81 V69 H15 L17 71 H24 V81 Z" fill="#ddd" stroke="#333" stroke-width="1"/><path d="M9 81 L12 74 H26 L23 81 Z" fill="#f5f5f5" stroke="#333" stroke-width="1"/>
 <!-- view palette -->
 <rect x="9" y="97" width="17" height="15" rx="1" fill="#f2f2f2" stroke="#333" stroke-width="1"/><path d="M11 100 H17 V103 H15 V107 H18 V110 H11 V107 H13 V103 H11 Z" fill="#f0c020"/><rect x="19" y="100" width="4" height="3" fill="#f0c020"/><rect x="21" y="105" width="3" height="5" fill="#999"/>
 <!-- appearances ball -->
 <g transform="translate(16.5,134)"><path d="M0 0 L-7 -2 A7 7 0 0 1 1 -7 Z" fill="#2f78d8"/><path d="M0 0 L1 -7 A7 7 0 0 1 6.5 3 Z" fill="#e02020"/><path d="M0 0 L6.5 3 A7 7 0 0 1 -2 6.7 Z" fill="#f0c000"/><path d="M0 0 L-2 6.7 A7 7 0 0 1 -7 -2 Z" fill="#20a040"/><circle r="7" fill="url(#ball)"/></g>
 <!-- custom props -->
 <rect x="9.5" y="156.5" width="15" height="16" rx="1" fill="#fff" stroke="#1e4f75" stroke-width="1"/><rect x="9.5" y="156.5" width="15" height="3" fill="#5aa0d0"/><rect x="11" y="162" width="3" height="2" fill="#1e5a80"/><rect x="11" y="165.5" width="3" height="2" fill="#1e5a80"/><rect x="11" y="169" width="3" height="2" fill="#1e5a80"/><path d="M15 163 H22 M15 166.5 H22 M15 170 H22" stroke="#333" stroke-width="0.9"/>
 <!-- 3dexp -->
 <circle cx="16.5" cy="194" r="8" fill="#1a5a8a" stroke="#0a3050" stroke-width="1"/><circle cx="16.5" cy="194" r="5" fill="none" stroke="#7ab8e0" stroke-width="0.8"/><path d="M15 191 L19 194 L15 197 Z" fill="#cfe6f6"/>
</svg>

<div id="tabs" class="a"></div>
<div class="a" style="left:0;top:121px;width:1919px;height:1px;background:#a5a5a5"></div>
<div class="a" style="left:0px;top:121px;width:69px;height:28px;background:#d6d6d6;border:1px solid #a5a5a5;border-bottom:none"></div>
<div class="t" style="left:9.4px;top:128.1px;font-size:14.6px;color:#1c1c1c">Сборка</div>
<div class="a" style="left:68px;top:121px;width:122px;height:28px;background:#d6d6d6;border:1px solid #a5a5a5;border-bottom:none"></div>
<div class="t" style="left:78px;top:127.7px;font-size:15.1px;color:#1c1c1c">Расположение</div>
<div class="a" style="left:189px;top:121px;width:58px;height:28px;background:#d6d6d6;border:1px solid #a5a5a5;border-bottom:none"></div>
<div class="t" style="left:199.1px;top:128.3px;font-size:14.4px;color:#1c1c1c">Эскиз</div>
<div class="a" style="left:246px;top:121px;width:112px;height:28px;background:#d6d6d6;border:1px solid #a5a5a5;border-bottom:none"></div>
<div class="t" style="left:255.3px;top:127.8px;font-size:15px;color:#1c1c1c">Исправление</div>
<div class="a" style="left:495px;top:121px;width:207px;height:28px;background:#d6d6d6;border:1px solid #a5a5a5;border-bottom:none"></div>
<div class="t" style="left:508.3px;top:128.4px;font-size:14.25px;color:#1c1c1c">Добавления SOLIDWORKS</div>
<div class="a" style="left:701px;top:121px;width:57px;height:28px;background:#d6d6d6;border:1px solid #a5a5a5;border-bottom:none"></div>
<div class="t" style="left:713.3px;top:128.1px;font-size:14.6px;color:#1c1c1c">MBD</div>
<div class="a" style="left:757px;top:121px;width:158px;height:28px;background:#d6d6d6;border:1px solid #a5a5a5;border-bottom:none"></div>
<div class="t" style="left:770px;top:128.9px;font-size:13.75px;color:#1c1c1c">SOLIDWORKS CAM</div>
<div class="a" style="left:914px;top:121px;width:191px;height:28px;background:#d6d6d6;border:1px solid #a5a5a5;border-bottom:none"></div>
<div class="t" style="left:928.3px;top:128.6px;font-size:14.05px;color:#1c1c1c">SOLIDWORKS Inspection</div>
<div class="a" style="left:357px;top:121px;width:139px;height:28px;background:#f7f7f7"></div>
<div class="t" style="left:371.3px;top:128.3px;font-size:14.4px;font-weight:bold;color:#333">Анализировать</div>

<div id="panel" class="a"></div>
<div class="a" style="left:0;top:149px;width:272px;height:839px;background:#f7f7f7"></div>
<div class="a" style="left:1px;top:150px;width:207px;height:2px;background:#050505"></div>
<div class="a" style="left:208px;top:150px;width:61px;height:2px;background:#ffffff"></div>
<div class="a" style="left:19px;top:150px;width:13px;height:2px;background:#2a90e8"></div>
<div class="a" style="left:35px;top:150px;width:12px;height:2px;background:#2a90e8"></div>
<div class="a" style="left:52px;top:150px;width:22px;height:2px;background:#1a70c8"></div>
<div class="a" style="left:120px;top:150px;width:12px;height:2px;background:#2a90e8"></div>
<div class="a" style="left:136px;top:150px;width:28px;height:2px;background:#1a70c8"></div>
<div class="a" style="left:208px;top:150px;width:11px;height:2px;background:#1a80e0"></div>
<div class="a" style="left:232px;top:150px;width:14px;height:1.5px;background:#2a90e8"></div>
<div class="a" style="left:255px;top:150px;width:14px;height:2px;background:#1a80e0"></div>
<div class="a" style="left:0;top:152px;width:270px;height:2px;background:#ffffff"></div>
<div class="a" style="left:0;top:154px;width:270px;height:1px;background:#c4c4c4"></div>
<div class="a" style="left:131.5px;top:160.5px;width:7px;height:7px;border-radius:50%;background:#d2d2d2;border:1px solid #a8a8a8"></div>
<div class="a" style="left:0;top:174px;width:270px;height:1px;background:#cacaca"></div>
<div class="a" style="left:2px;top:179px;width:268px;height:1px;background:#8e8e8e"></div>
<div class="a" style="left:0;top:204px;width:1px;height:780px;background:#a8a8a8"></div>
<div class="a" style="left:41px;top:180px;width:41px;height:25px;background:#d4d4d4;border:1px solid #a2a2a2;border-top:none"></div>
<div class="a" style="left:81px;top:180px;width:41px;height:25px;background:#d4d4d4;border:1px solid #a2a2a2;border-top:none"></div>
<div class="a" style="left:121px;top:180px;width:41px;height:25px;background:#d4d4d4;border:1px solid #a2a2a2;border-top:none"></div>
<div class="a" style="left:161px;top:180px;width:41px;height:25px;background:#d4d4d4;border:1px solid #a2a2a2;border-top:none"></div>
<div class="a" style="left:201px;top:180px;width:23px;height:25px;background:#d4d4d4;border:1px solid #a2a2a2;border-top:none"></div>
<div class="a" style="left:2px;top:204px;width:39px;height:1px;background:#f7f7f7"></div>
<div class="a" style="left:226px;top:182px;width:22px;height:23px;background:#ececec;border:1px solid #c8c8c8"></div>
<div class="a" style="left:249px;top:182px;width:21px;height:23px;background:#ececec;border:1px solid #c8c8c8"></div>
<div class="a" style="left:5px;top:205px;width:262px;height:32px;background:#f7f7f7;border:1px solid #bdbdbd"></div>
<div class="a" style="left:251px;top:238px;width:19px;height:724px;background:#efefef"></div>
<div class="a" style="left:251px;top:400px;width:19px;height:70px;background:#cdcdcd"></div>
<div class="a" style="left:1px;top:962px;width:269px;height:21px;background:#f0f0f0"></div>
<div class="a" style="left:22px;top:963px;width:65px;height:19px;background:#cdcdcd"></div>
<div class="a" style="left:0;top:984px;width:272px;height:1px;background:#c8c8c8"></div>
<div class="a" style="left:271px;top:531px;width:12px;height:47px;background:#f7f7f7;border:1px solid #a0a0a0;border-left:none"></div>
<div class="a" style="left:273.5px;top:550.5px;width:7px;height:7px;border-radius:50%;background:#d2d2d2;border:1px solid #a8a8a8"></div>
<div class="a" style="left:0;top:238px;width:251px;height:724px;overflow:hidden">
<div class="t" style="left:50px;top:3.7px;font-size:15.2px;color:#111"><span>(-) </span>soshka rul&lt;4&gt; (По умолчанию)</div>
<div class="t" style="left:50px;top:27.7px;font-size:15.2px;color:#111"><span>(-) </span>soshka rul&lt;5&gt; (По умолчанию)</div>
<div class="t" style="left:50px;top:51.7px;font-size:15.2px;color:#111"><span>(-) </span>колесо&lt;1&gt; (По умолчанию)</div>
<div class="t" style="left:50px;top:75.7px;font-size:15.2px;color:#111"><span>(-) </span>колесо&lt;2&gt; (По умолчанию)</div>
<div class="t" style="left:50px;top:99.7px;font-size:15.2px;color:#111"><span>(-) </span>колесо&lt;3&gt; (По умолчанию)</div>
<div class="t" style="left:50px;top:123.7px;font-size:15.2px;color:#111"><span>(-) </span>колесо&lt;4&gt; (По умолчанию)</div>
<div class="t" style="left:50px;top:147.7px;font-size:15.2px;color:#111"><span>(-) </span>колесо&lt;5&gt; (По умолчанию)</div>
<div class="t" style="left:50px;top:171.7px;font-size:15.2px;color:#111"><span>(-) </span>колесо&lt;6&gt; (По умолчанию)</div>
<div class="t" style="left:50px;top:195.7px;font-size:15.2px;color:#111"><span>(-) </span>колесо&lt;7&gt; (По умолчанию)</div>
<div class="t" style="left:50px;top:219.7px;font-size:15.2px;color:#111"><span>(-) </span>колесо&lt;8&gt; (По умолчанию)</div>
<div class="t" style="left:50px;top:243.7px;font-size:15.2px;color:#111"><span></span>most&lt;1&gt; (По умолчанию) &lt;&lt;</div>
<div class="t" style="left:50px;top:267.7px;font-size:15.2px;color:#111"><span></span>most&lt;2&gt; (По умолчанию) &lt;&lt;</div>
<div class="t" style="left:50px;top:291.7px;font-size:15.2px;color:#111"><span>(-) </span>most&lt;3&gt; (По умолчанию)</div>
<div class="t" style="left:50px;top:315.7px;font-size:15.2px;color:#111"><span>(-) </span>most&lt;4&gt; (По умолчанию)</div>
<div class="t" style="left:50px;top:339.7px;font-size:15.2px;color:#111"><span>(-) </span>most kulak1&lt;1&gt; (По умолчанию)</div>
<div class="t" style="left:50px;top:363.7px;font-size:15.2px;color:#111"><span>(-) </span>most kulak1&lt;2&gt; (По умолчанию)</div>
<div class="t" style="left:50px;top:387.7px;font-size:15.2px;color:#111"><span>(-) </span>most kulak1&lt;3&gt; (По умолчанию)</div>
<div class="t" style="left:50px;top:411.7px;font-size:15.2px;color:#111"><span>(-) </span>most kulak1&lt;4&gt; (По умолчанию)</div>
<div class="t" style="left:50px;top:435.7px;font-size:15.2px;color:#111"><span>(-) </span>most kulak2&lt;1&gt; (По умолчанию)</div>
<div class="t" style="left:50px;top:459.7px;font-size:15.2px;color:#111"><span>(-) </span>most kulak2&lt;2&gt; (По умолчанию)</div>
<div class="t" style="left:50px;top:483.7px;font-size:15.2px;color:#111"><span>(-) </span>most kulak2&lt;3&gt; (По умолчанию)</div>
<div class="t" style="left:50px;top:507.7px;font-size:15.2px;color:#111"><span>(-) </span>most kulak2&lt;4&gt; (По умолчанию)</div>
<div class="t" style="left:50px;top:531.7px;font-size:15.2px;color:#111"><span>(-) </span>poperechnaa-taga&lt;1&gt; (По умолчанию)</div>
<div class="t" style="left:50px;top:555.7px;font-size:15.2px;color:#111"><span>(-) </span>poperechnaa-taga&lt;2&gt; (По умолчанию)</div>
<div class="t" style="left:50px;top:579.7px;font-size:15.2px;color:#111"><span>(-) </span>poperechnaa-taga&lt;3&gt; (По умолчанию)</div>
<div class="t" style="left:50px;top:603.7px;font-size:15.2px;color:#111"><span>(-) </span>poperechnaa-taga&lt;4&gt; (По умолчанию)</div>
<div class="t" style="left:50px;top:627.7px;font-size:15.2px;color:#111">Mates</div>
<div class="t" style="left:73px;top:651.7px;font-size:15.2px;color:#9a9a9a">(ф) Совпадение1 (рама левая)</div>
<div class="t" style="left:73px;top:675.7px;font-size:15.2px;color:#111">Концентричный1 (рама горизонтальная)</div>
<div class="t" style="left:73px;top:699.7px;font-size:15.2px;color:#111">Совпадение2 (рама правая)</div>
</div>
<svg class="a" style="left:0;top:0" width="290" height="990">
<g transform="translate(14,183)" stroke="#5a4500" stroke-width="0.9" stroke-linejoin="round"><path d="M0.5 7.5 L5 5 L5 3.5 L9 1.5 L19 6 L19 14 L13 18 L0.5 11.5 Z" fill="#f2c820"/><path d="M0.5 7.5 L13 13.5 L19 10 M13 13.5 V18" fill="none"/><path d="M13 13.5 L19 10 V14 L13 18 Z" fill="#fde98a"/><g stroke="#1e5a80"><path d="M9 4 L13 2 L18.5 4.5 L14.5 6.5 Z" fill="#cfe8f8"/><path d="M9 4 L14.5 6.5 V12 L9 9.5 Z" fill="#7ab8e0"/><path d="M14.5 6.5 L18.5 4.5 V10 L14.5 12 Z" fill="#a8d4f0"/></g></g>
<g transform="translate(53,184)"><rect x="0.5" y="0.5" width="16" height="16" rx="1.5" fill="#fff" stroke="#1e4f75" stroke-width="1"/><rect x="0.5" y="0.5" width="16" height="3" fill="#5aa0d0"/><rect x="2.5" y="6" width="3" height="2" fill="#1e5a80"/><rect x="2.5" y="9.5" width="3" height="2" fill="#1e5a80"/><rect x="2.5" y="13" width="3" height="2" fill="#1e5a80"/><path d="M7 7 H14 M7 10.5 H14 M7 14 H14" stroke="#333" stroke-width="0.9"/></g>
<g transform="translate(95,183)" fill="#fff" stroke="#222" stroke-width="1.1"><path d="M1 1 V18 M1 5 H5 M1 15 H5"/><rect x="5" y="2" width="6" height="6"/><rect x="5" y="11" width="6" height="6"/></g>
<g transform="translate(133,183)" fill="none" stroke="#111" stroke-width="1.8"><circle cx="9" cy="9" r="6"/><path d="M9 0 V18 M0 9 H18"/></g>
<defs><radialGradient id="ball" cx="0.35" cy="0.3" r="0.8"><stop offset="0" stop-color="#fff" stop-opacity="0.7"/><stop offset="0.4" stop-color="#fff" stop-opacity="0"/></radialGradient></defs>
<g transform="translate(181,192)"><path d="M0 0 L-9 -2 A9 9 0 0 1 2 -9 Z" fill="#2f78d8"/><path d="M0 0 L2 -9 A9 9 0 0 1 8 5 Z" fill="#e02020"/><path d="M0 0 L8 5 A9 9 0 0 1 -3 8.5 Z" fill="#f0c000"/><path d="M0 0 L-3 8.5 A9 9 0 0 1 -9 -2 Z" fill="#20a040"/><ellipse cx="4" cy="-3" rx="2.5" ry="4" fill="#111" transform="rotate(-30 4 -3)"/><circle r="9" fill="url(#ball)"/></g>
<g transform="translate(210,182)" stroke-linejoin="round"><rect x="0" y="2" width="16" height="18" fill="#a8a8a8"/><path d="M3 6 L7 2 H16 V12 L12 16 H3 Z" fill="#9fd0f0" stroke="#2a7ab0" stroke-width="0.8"/><path d="M3 6 H12 V16 M12 6 L16 2 M3 11 H12 M7.5 6 V16 M3 6 L12 16" fill="none" stroke="#2a7ab0" stroke-width="0.6"/><path d="M3 16 V20 H12 L16 16 V12 L12 16 Z" fill="#fff" stroke="#666" stroke-width="0.7"/></g>
<path d="M239 188 L234 192.5 L239 197 Z" fill="#111"/><path d="M258 188 L263 192.5 L258 197 Z" fill="#111"/>
<g transform="translate(8,213)"><rect x="0" y="0" width="13" height="3.5" rx="1.5" fill="#5ab0e0" stroke="#1e5a80" stroke-width="0.8"/><path d="M1 3.5 L6 10 V17 L8 16 V10 L12.5 3.5" fill="#fff" stroke="#333" stroke-width="0.9"/><path d="M18 10 L23 10 L20.5 13 Z" fill="#333"/></g>
<path d="M10 245.1 L14.2 248.6 L10 252.1 Z" fill="#5a5a5a"/>
<g transform="translate(28,240.0)" stroke="#5a4500" stroke-width="0.8" stroke-linejoin="round"><path d="M0.5 6.5 L4.5 4.2 L4.5 3 L8 1 L13 3.2 L13 8 L16.5 10 L16.5 14.5 L11.5 17.5 L0.5 11.5 Z" fill="#f2c820"/><path d="M4.5 4.2 L8 1 L13 3.2 L9.5 5.5 Z" fill="#fbe37a"/><path d="M9.5 5.5 L13 3.2 L13 8 L9.5 10 Z" fill="#fde98a"/><path d="M9.5 10 L13 8 L16.5 10 L12 12.5 Z" fill="#fbe37a"/><path d="M12 12.5 L16.5 10 L16.5 14.5 L11.5 17.5 Z" fill="#fde98a"/><path d="M0.5 6.5 L4.5 8.5 L4.5 4.2 M4.5 8.5 L9.5 10 M0.5 6.5 L0.5 11.5" fill="none"/></g>
<path d="M10 269.1 L14.2 272.6 L10 276.1 Z" fill="#5a5a5a"/>
<g transform="translate(28,264.0)" stroke="#5a4500" stroke-width="0.8" stroke-linejoin="round"><path d="M0.5 6.5 L4.5 4.2 L4.5 3 L8 1 L13 3.2 L13 8 L16.5 10 L16.5 14.5 L11.5 17.5 L0.5 11.5 Z" fill="#f2c820"/><path d="M4.5 4.2 L8 1 L13 3.2 L9.5 5.5 Z" fill="#fbe37a"/><path d="M9.5 5.5 L13 3.2 L13 8 L9.5 10 Z" fill="#fde98a"/><path d="M9.5 10 L13 8 L16.5 10 L12 12.5 Z" fill="#fbe37a"/><path d="M12 12.5 L16.5 10 L16.5 14.5 L11.5 17.5 Z" fill="#fde98a"/><path d="M0.5 6.5 L4.5 8.5 L4.5 4.2 M4.5 8.5 L9.5 10 M0.5 6.5 L0.5 11.5" fill="none"/></g>
<path d="M10 293.1 L14.2 296.6 L10 300.1 Z" fill="#5a5a5a"/>
<g transform="translate(28,288.0)" stroke="#5a4500" stroke-width="0.8" stroke-linejoin="round"><path d="M0.5 6.5 L4.5 4.2 L4.5 3 L8 1 L13 3.2 L13 8 L16.5 10 L16.5 14.5 L11.5 17.5 L0.5 11.5 Z" fill="#f2c820"/><path d="M4.5 4.2 L8 1 L13 3.2 L9.5 5.5 Z" fill="#fbe37a"/><path d="M9.5 5.5 L13 3.2 L13 8 L9.5 10 Z" fill="#fde98a"/><path d="M9.5 10 L13 8 L16.5 10 L12 12.5 Z" fill="#fbe37a"/><path d="M12 12.5 L16.5 10 L16.5 14.5 L11.5 17.5 Z" fill="#fde98a"/><path d="M0.5 6.5 L4.5 8.5 L4.5 4.2 M4.5 8.5 L9.5 10 M0.5 6.5 L0.5 11.5" fill="none"/></g>
<path d="M10 317.1 L14.2 320.6 L10 324.1 Z" fill="#5a5a5a"/>
<g transform="translate(28,312.0)" stroke="#5a4500" stroke-width="0.8" stroke-linejoin="round"><path d="M0.5 6.5 L4.5 4.2 L4.5 3 L8 1 L13 3.2 L13 8 L16.5 10 L16.5 14.5 L11.5 17.5 L0.5 11.5 Z" fill="#f2c820"/><path d="M4.5 4.2 L8 1 L13 3.2 L9.5 5.5 Z" fill="#fbe37a"/><path d="M9.5 5.5 L13 3.2 L13 8 L9.5 10 Z" fill="#fde98a"/><path d="M9.5 10 L13 8 L16.5 10 L12 12.5 Z" fill="#fbe37a"/><path d="M12 12.5 L16.5 10 L16.5 14.5 L11.5 17.5 Z" fill="#fde98a"/><path d="M0.5 6.5 L4.5 8.5 L4.5 4.2 M4.5 8.5 L9.5 10 M0.5 6.5 L0.5 11.5" fill="none"/></g>
<path d="M10 341.1 L14.2 344.6 L10 348.1 Z" fill="#5a5a5a"/>
<g transform="translate(28,336.0)" stroke="#5a4500" stroke-width="0.8" stroke-linejoin="round"><path d="M0.5 6.5 L4.5 4.2 L4.5 3 L8 1 L13 3.2 L13 8 L16.5 10 L16.5 14.5 L11.5 17.5 L0.5 11.5 Z" fill="#f2c820"/><path d="M4.5 4.2 L8 1 L13 3.2 L9.5 5.5 Z" fill="#fbe37a"/><path d="M9.5 5.5 L13 3.2 L13 8 L9.5 10 Z" fill="#fde98a"/><path d="M9.5 10 L13 8 L16.5 10 L12 12.5 Z" fill="#fbe37a"/><path d="M12 12.5 L16.5 10 L16.5 14.5 L11.5 17.5 Z" fill="#fde98a"/><path d="M0.5 6.5 L4.5 8.5 L4.5 4.2 M4.5 8.5 L9.5 10 M0.5 6.5 L0.5 11.5" fill="none"/></g>
<path d="M10 365.1 L14.2 368.6 L10 372.1 Z" fill="#5a5a5a"/>
<g transform="translate(28,360.0)" stroke="#5a4500" stroke-width="0.8" stroke-linejoin="round"><path d="M0.5 6.5 L4.5 4.2 L4.5 3 L8 1 L13 3.2 L13 8 L16.5 10 L16.5 14.5 L11.5 17.5 L0.5 11.5 Z" fill="#f2c820"/><path d="M4.5 4.2 L8 1 L13 3.2 L9.5 5.5 Z" fill="#fbe37a"/><path d="M9.5 5.5 L13 3.2 L13 8 L9.5 10 Z" fill="#fde98a"/><path d="M9.5 10 L13 8 L16.5 10 L12 12.5 Z" fill="#fbe37a"/><path d="M12 12.5 L16.5 10 L16.5 14.5 L11.5 17.5 Z" fill="#fde98a"/><path d="M0.5 6.5 L4.5 8.5 L4.5 4.2 M4.5 8.5 L9.5 10 M0.5 6.5 L0.5 11.5" fill="none"/></g>
<path d="M10 389.1 L14.2 392.6 L10 396.1 Z" fill="#5a5a5a"/>
<g transform="translate(28,384.0)" stroke="#5a4500" stroke-width="0.8" stroke-linejoin="round"><path d="M0.5 6.5 L4.5 4.2 L4.5 3 L8 1 L13 3.2 L13 8 L16.5 10 L16.5 14.5 L11.5 17.5 L0.5 11.5 Z" fill="#f2c820"/><path d="M4.5 4.2 L8 1 L13 3.2 L9.5 5.5 Z" fill="#fbe37a"/><path d="M9.5 5.5 L13 3.2 L13 8 L9.5 10 Z" fill="#fde98a"/><path d="M9.5 10 L13 8 L16.5 10 L12 12.5 Z" fill="#fbe37a"/><path d="M12 12.5 L16.5 10 L16.5 14.5 L11.5 17.5 Z" fill="#fde98a"/><path d="M0.5 6.5 L4.5 8.5 L4.5 4.2 M4.5 8.5 L9.5 10 M0.5 6.5 L0.5 11.5" fill="none"/></g>
<path d="M10 413.1 L14.2 416.6 L10 420.1 Z" fill="#5a5a5a"/>
<g transform="translate(28,408.0)" stroke="#5a4500" stroke-width="0.8" stroke-linejoin="round"><path d="M0.5 6.5 L4.5 4.2 L4.5 3 L8 1 L13 3.2 L13 8 L16.5 10 L16.5 14.5 L11.5 17.5 L0.5 11.5 Z" fill="#f2c820"/><path d="M4.5 4.2 L8 1 L13 3.2 L9.5 5.5 Z" fill="#fbe37a"/><path d="M9.5 5.5 L13 3.2 L13 8 L9.5 10 Z" fill="#fde98a"/><path d="M9.5 10 L13 8 L16.5 10 L12 12.5 Z" fill="#fbe37a"/><path d="M12 12.5 L16.5 10 L16.5 14.5 L11.5 17.5 Z" fill="#fde98a"/><path d="M0.5 6.5 L4.5 8.5 L4.5 4.2 M4.5 8.5 L9.5 10 M0.5 6.5 L0.5 11.5" fill="none"/></g>
<path d="M10 437.1 L14.2 440.6 L10 444.1 Z" fill="#5a5a5a"/>
<g transform="translate(28,432.0)" stroke="#5a4500" stroke-width="0.8" stroke-linejoin="round"><path d="M0.5 6.5 L4.5 4.2 L4.5 3 L8 1 L13 3.2 L13 8 L16.5 10 L16.5 14.5 L11.5 17.5 L0.5 11.5 Z" fill="#f2c820"/><path d="M4.5 4.2 L8 1 L13 3.2 L9.5 5.5 Z" fill="#fbe37a"/><path d="M9.5 5.5 L13 3.2 L13 8 L9.5 10 Z" fill="#fde98a"/><path d="M9.5 10 L13 8 L16.5 10 L12 12.5 Z" fill="#fbe37a"/><path d="M12 12.5 L16.5 10 L16.5 14.5 L11.5 17.5 Z" fill="#fde98a"/><path d="M0.5 6.5 L4.5 8.5 L4.5 4.2 M4.5 8.5 L9.5 10 M0.5 6.5 L0.5 11.5" fill="none"/></g>
<path d="M10 461.1 L14.2 464.6 L10 468.1 Z" fill="#5a5a5a"/>
<g transform="translate(28,456.0)" stroke="#5a4500" stroke-width="0.8" stroke-linejoin="round"><path d="M0.5 6.5 L4.5 4.2 L4.5 3 L8 1 L13 3.2 L13 8 L16.5 10 L16.5 14.5 L11.5 17.5 L0.5 11.5 Z" fill="#f2c820"/><path d="M4.5 4.2 L8 1 L13 3.2 L9.5 5.5 Z" fill="#fbe37a"/><path d="M9.5 5.5 L13 3.2 L13 8 L9.5 10 Z" fill="#fde98a"/><path d="M9.5 10 L13 8 L16.5 10 L12 12.5 Z" fill="#fbe37a"/><path d="M12 12.5 L16.5 10 L16.5 14.5 L11.5 17.5 Z" fill="#fde98a"/><path d="M0.5 6.5 L4.5 8.5 L4.5 4.2 M4.5 8.5 L9.5 10 M0.5 6.5 L0.5 11.5" fill="none"/></g>
<path d="M10 485.1 L14.2 488.6 L10 492.1 Z" fill="#5a5a5a"/>
<g transform="translate(28,480.0)" stroke="#5a4500" stroke-width="0.8" stroke-linejoin="round"><path d="M0.5 6.5 L4.5 4.2 L4.5 3 L8 1 L13 3.2 L13 8 L16.5 10 L16.5 14.5 L11.5 17.5 L0.5 11.5 Z" fill="#f2c820"/><path d="M4.5 4.2 L8 1 L13 3.2 L9.5 5.5 Z" fill="#fbe37a"/><path d="M9.5 5.5 L13 3.2 L13 8 L9.5 10 Z" fill="#fde98a"/><path d="M9.5 10 L13 8 L16.5 10 L12 12.5 Z" fill="#fbe37a"/><path d="M12 12.5 L16.5 10 L16.5 14.5 L11.5 17.5 Z" fill="#fde98a"/><path d="M0.5 6.5 L4.5 8.5 L4.5 4.2 M4.5 8.5 L9.5 10 M0.5 6.5 L0.5 11.5" fill="none"/></g>
<path d="M10 509.1 L14.2 512.6 L10 516.1 Z" fill="#5a5a5a"/>
<g transform="translate(28,504.0)" stroke="#5a4500" stroke-width="0.8" stroke-linejoin="round"><path d="M0.5 6.5 L4.5 4.2 L4.5 3 L8 1 L13 3.2 L13 8 L16.5 10 L16.5 14.5 L11.5 17.5 L0.5 11.5 Z" fill="#f2c820"/><path d="M4.5 4.2 L8 1 L13 3.2 L9.5 5.5 Z" fill="#fbe37a"/><path d="M9.5 5.5 L13 3.2 L13 8 L9.5 10 Z" fill="#fde98a"/><path d="M9.5 10 L13 8 L16.5 10 L12 12.5 Z" fill="#fbe37a"/><path d="M12 12.5 L16.5 10 L16.5 14.5 L11.5 17.5 Z" fill="#fde98a"/><path d="M0.5 6.5 L4.5 8.5 L4.5 4.2 M4.5 8.5 L9.5 10 M0.5 6.5 L0.5 11.5" fill="none"/></g>
<path d="M10 533.1 L14.2 536.6 L10 540.1 Z" fill="#5a5a5a"/>
<g transform="translate(28,528.0)" stroke="#5a4500" stroke-width="0.8" stroke-linejoin="round"><path d="M0.5 6.5 L4.5 4.2 L4.5 3 L8 1 L13 3.2 L13 8 L16.5 10 L16.5 14.5 L11.5 17.5 L0.5 11.5 Z" fill="#f2c820"/><path d="M4.5 4.2 L8 1 L13 3.2 L9.5 5.5 Z" fill="#fbe37a"/><path d="M9.5 5.5 L13 3.2 L13 8 L9.5 10 Z" fill="#fde98a"/><path d="M9.5 10 L13 8 L16.5 10 L12 12.5 Z" fill="#fbe37a"/><path d="M12 12.5 L16.5 10 L16.5 14.5 L11.5 17.5 Z" fill="#fde98a"/><path d="M0.5 6.5 L4.5 8.5 L4.5 4.2 M4.5 8.5 L9.5 10 M0.5 6.5 L0.5 11.5" fill="none"/></g>
<path d="M10 557.1 L14.2 560.6 L10 564.1 Z" fill="#5a5a5a"/>
<g transform="translate(28,552.0)" stroke="#5a4500" stroke-width="0.8" stroke-linejoin="round"><path d="M0.5 6.5 L4.5 4.2 L4.5 3 L8 1 L13 3.2 L13 8 L16.5 10 L16.5 14.5 L11.5 17.5 L0.5 11.5 Z" fill="#f2c820"/><path d="M4.5 4.2 L8 1 L13 3.2 L9.5 5.5 Z" fill="#fbe37a"/><path d="M9.5 5.5 L13 3.2 L13 8 L9.5 10 Z" fill="#fde98a"/><path d="M9.5 10 L13 8 L16.5 10 L12 12.5 Z" fill="#fbe37a"/><path d="M12 12.5 L16.5 10 L16.5 14.5 L11.5 17.5 Z" fill="#fde98a"/><path d="M0.5 6.5 L4.5 8.5 L4.5 4.2 M4.5 8.5 L9.5 10 M0.5 6.5 L0.5 11.5" fill="none"/></g>
<path d="M10 581.1 L14.2 584.6 L10 588.1 Z" fill="#5a5a5a"/>
<g transform="translate(28,576.0)" stroke="#5a4500" stroke-width="0.8" stroke-linejoin="round"><path d="M0.5 6.5 L4.5 4.2 L4.5 3 L8 1 L13 3.2 L13 8 L16.5 10 L16.5 14.5 L11.5 17.5 L0.5 11.5 Z" fill="#f2c820"/><path d="M4.5 4.2 L8 1 L13 3.2 L9.5 5.5 Z" fill="#fbe37a"/><path d="M9.5 5.5 L13 3.2 L13 8 L9.5 10 Z" fill="#fde98a"/><path d="M9.5 10 L13 8 L16.5 10 L12 12.5 Z" fill="#fbe37a"/><path d="M12 12.5 L16.5 10 L16.5 14.5 L11.5 17.5 Z" fill="#fde98a"/><path d="M0.5 6.5 L4.5 8.5 L4.5 4.2 M4.5 8.5 L9.5 10 M0.5 6.5 L0.5 11.5" fill="none"/></g>
<path d="M10 605.1 L14.2 608.6 L10 612.1 Z" fill="#5a5a5a"/>
<g transform="translate(28,600.0)" stroke="#5a4500" stroke-width="0.8" stroke-linejoin="round"><path d="M0.5 6.5 L4.5 4.2 L4.5 3 L8 1 L13 3.2 L13 8 L16.5 10 L16.5 14.5 L11.5 17.5 L0.5 11.5 Z" fill="#f2c820"/><path d="M4.5 4.2 L8 1 L13 3.2 L9.5 5.5 Z" fill="#fbe37a"/><path d="M9.5 5.5 L13 3.2 L13 8 L9.5 10 Z" fill="#fde98a"/><path d="M9.5 10 L13 8 L16.5 10 L12 12.5 Z" fill="#fbe37a"/><path d="M12 12.5 L16.5 10 L16.5 14.5 L11.5 17.5 Z" fill="#fde98a"/><path d="M0.5 6.5 L4.5 8.5 L4.5 4.2 M4.5 8.5 L9.5 10 M0.5 6.5 L0.5 11.5" fill="none"/></g>
<path d="M10 629.1 L14.2 632.6 L10 636.1 Z" fill="#5a5a5a"/>
<g transform="translate(28,624.0)" stroke="#5a4500" stroke-width="0.8" stroke-linejoin="round"><path d="M0.5 6.5 L4.5 4.2 L4.5 3 L8 1 L13 3.2 L13 8 L16.5 10 L16.5 14.5 L11.5 17.5 L0.5 11.5 Z" fill="#f2c820"/><path d="M4.5 4.2 L8 1 L13 3.2 L9.5 5.5 Z" fill="#fbe37a"/><path d="M9.5 5.5 L13 3.2 L13 8 L9.5 10 Z" fill="#fde98a"/><path d="M9.5 10 L13 8 L16.5 10 L12 12.5 Z" fill="#fbe37a"/><path d="M12 12.5 L16.5 10 L16.5 14.5 L11.5 17.5 Z" fill="#fde98a"/><path d="M0.5 6.5 L4.5 8.5 L4.5 4.2 M4.5 8.5 L9.5 10 M0.5 6.5 L0.5 11.5" fill="none"/></g>
<path d="M10 653.1 L14.2 656.6 L10 660.1 Z" fill="#5a5a5a"/>
<g transform="translate(28,648.0)" stroke="#5a4500" stroke-width="0.8" stroke-linejoin="round"><path d="M0.5 6.5 L4.5 4.2 L4.5 3 L8 1 L13 3.2 L13 8 L16.5 10 L16.5 14.5 L11.5 17.5 L0.5 11.5 Z" fill="#f2c820"/><path d="M4.5 4.2 L8 1 L13 3.2 L9.5 5.5 Z" fill="#fbe37a"/><path d="M9.5 5.5 L13 3.2 L13 8 L9.5 10 Z" fill="#fde98a"/><path d="M9.5 10 L13 8 L16.5 10 L12 12.5 Z" fill="#fbe37a"/><path d="M12 12.5 L16.5 10 L16.5 14.5 L11.5 17.5 Z" fill="#fde98a"/><path d="M0.5 6.5 L4.5 8.5 L4.5 4.2 M4.5 8.5 L9.5 10 M0.5 6.5 L0.5 11.5" fill="none"/></g>
<path d="M10 677.1 L14.2 680.6 L10 684.1 Z" fill="#5a5a5a"/>
<g transform="translate(28,672.0)" stroke="#5a4500" stroke-width="0.8" stroke-linejoin="round"><path d="M0.5 6.5 L4.5 4.2 L4.5 3 L8 1 L13 3.2 L13 8 L16.5 10 L16.5 14.5 L11.5 17.5 L0.5 11.5 Z" fill="#f2c820"/><path d="M4.5 4.2 L8 1 L13 3.2 L9.5 5.5 Z" fill="#fbe37a"/><path d="M9.5 5.5 L13 3.2 L13 8 L9.5 10 Z" fill="#fde98a"/><path d="M9.5 10 L13 8 L16.5 10 L12 12.5 Z" fill="#fbe37a"/><path d="M12 12.5 L16.5 10 L16.5 14.5 L11.5 17.5 Z" fill="#fde98a"/><path d="M0.5 6.5 L4.5 8.5 L4.5 4.2 M4.5 8.5 L9.5 10 M0.5 6.5 L0.5 11.5" fill="none"/></g>
<path d="M10 701.1 L14.2 704.6 L10 708.1 Z" fill="#5a5a5a"/>
<g transform="translate(28,696.0)" stroke="#5a4500" stroke-width="0.8" stroke-linejoin="round"><path d="M0.5 6.5 L4.5 4.2 L4.5 3 L8 1 L13 3.2 L13 8 L16.5 10 L16.5 14.5 L11.5 17.5 L0.5 11.5 Z" fill="#f2c820"/><path d="M4.5 4.2 L8 1 L13 3.2 L9.5 5.5 Z" fill="#fbe37a"/><path d="M9.5 5.5 L13 3.2 L13 8 L9.5 10 Z" fill="#fde98a"/><path d="M9.5 10 L13 8 L16.5 10 L12 12.5 Z" fill="#fbe37a"/><path d="M12 12.5 L16.5 10 L16.5 14.5 L11.5 17.5 Z" fill="#fde98a"/><path d="M0.5 6.5 L4.5 8.5 L4.5 4.2 M4.5 8.5 L9.5 10 M0.5 6.5 L0.5 11.5" fill="none"/></g>
<path d="M10 725.1 L14.2 728.6 L10 732.1 Z" fill="#5a5a5a"/>
<g transform="translate(28,720.0)" stroke="#5a4500" stroke-width="0.8" stroke-linejoin="round"><path d="M0.5 6.5 L4.5 4.2 L4.5 3 L8 1 L13 3.2 L13 8 L16.5 10 L16.5 14.5 L11.5 17.5 L0.5 11.5 Z" fill="#f2c820"/><path d="M4.5 4.2 L8 1 L13 3.2 L9.5 5.5 Z" fill="#fbe37a"/><path d="M9.5 5.5 L13 3.2 L13 8 L9.5 10 Z" fill="#fde98a"/><path d="M9.5 10 L13 8 L16.5 10 L12 12.5 Z" fill="#fbe37a"/><path d="M12 12.5 L16.5 10 L16.5 14.5 L11.5 17.5 Z" fill="#fde98a"/><path d="M0.5 6.5 L4.5 8.5 L4.5 4.2 M4.5 8.5 L9.5 10 M0.5 6.5 L0.5 11.5" fill="none"/></g>
<path d="M10 749.1 L14.2 752.6 L10 756.1 Z" fill="#5a5a5a"/>
<g transform="translate(28,744.0)" stroke="#5a4500" stroke-width="0.8" stroke-linejoin="round"><path d="M0.5 6.5 L4.5 4.2 L4.5 3 L8 1 L13 3.2 L13 8 L16.5 10 L16.5 14.5 L11.5 17.5 L0.5 11.5 Z" fill="#f2c820"/><path d="M4.5 4.2 L8 1 L13 3.2 L9.5 5.5 Z" fill="#fbe37a"/><path d="M9.5 5.5 L13 3.2 L13 8 L9.5 10 Z" fill="#fde98a"/><path d="M9.5 10 L13 8 L16.5 10 L12 12.5 Z" fill="#fbe37a"/><path d="M12 12.5 L16.5 10 L16.5 14.5 L11.5 17.5 Z" fill="#fde98a"/><path d="M0.5 6.5 L4.5 8.5 L4.5 4.2 M4.5 8.5 L9.5 10 M0.5 6.5 L0.5 11.5" fill="none"/></g>
<path d="M10 773.1 L14.2 776.6 L10 780.1 Z" fill="#5a5a5a"/>
<g transform="translate(28,768.0)" stroke="#5a4500" stroke-width="0.8" stroke-linejoin="round"><path d="M0.5 6.5 L4.5 4.2 L4.5 3 L8 1 L13 3.2 L13 8 L16.5 10 L16.5 14.5 L11.5 17.5 L0.5 11.5 Z" fill="#f2c820"/><path d="M4.5 4.2 L8 1 L13 3.2 L9.5 5.5 Z" fill="#fbe37a"/><path d="M9.5 5.5 L13 3.2 L13 8 L9.5 10 Z" fill="#fde98a"/><path d="M9.5 10 L13 8 L16.5 10 L12 12.5 Z" fill="#fbe37a"/><path d="M12 12.5 L16.5 10 L16.5 14.5 L11.5 17.5 Z" fill="#fde98a"/><path d="M0.5 6.5 L4.5 8.5 L4.5 4.2 M4.5 8.5 L9.5 10 M0.5 6.5 L0.5 11.5" fill="none"/></g>
<path d="M10 797.1 L14.2 800.6 L10 804.1 Z" fill="#5a5a5a"/>
<g transform="translate(28,792.0)" stroke="#5a4500" stroke-width="0.8" stroke-linejoin="round"><path d="M0.5 6.5 L4.5 4.2 L4.5 3 L8 1 L13 3.2 L13 8 L16.5 10 L16.5 14.5 L11.5 17.5 L0.5 11.5 Z" fill="#f2c820"/><path d="M4.5 4.2 L8 1 L13 3.2 L9.5 5.5 Z" fill="#fbe37a"/><path d="M9.5 5.5 L13 3.2 L13 8 L9.5 10 Z" fill="#fde98a"/><path d="M9.5 10 L13 8 L16.5 10 L12 12.5 Z" fill="#fbe37a"/><path d="M12 12.5 L16.5 10 L16.5 14.5 L11.5 17.5 Z" fill="#fde98a"/><path d="M0.5 6.5 L4.5 8.5 L4.5 4.2 M4.5 8.5 L9.5 10 M0.5 6.5 L0.5 11.5" fill="none"/></g>
<path d="M10 821.1 L14.2 824.6 L10 828.1 Z" fill="#5a5a5a"/>
<g transform="translate(28,816.0)" stroke="#5a4500" stroke-width="0.8" stroke-linejoin="round"><path d="M0.5 6.5 L4.5 4.2 L4.5 3 L8 1 L13 3.2 L13 8 L16.5 10 L16.5 14.5 L11.5 17.5 L0.5 11.5 Z" fill="#f2c820"/><path d="M4.5 4.2 L8 1 L13 3.2 L9.5 5.5 Z" fill="#fbe37a"/><path d="M9.5 5.5 L13 3.2 L13 8 L9.5 10 Z" fill="#fde98a"/><path d="M9.5 10 L13 8 L16.5 10 L12 12.5 Z" fill="#fbe37a"/><path d="M12 12.5 L16.5 10 L16.5 14.5 L11.5 17.5 Z" fill="#fde98a"/><path d="M0.5 6.5 L4.5 8.5 L4.5 4.2 M4.5 8.5 L9.5 10 M0.5 6.5 L0.5 11.5" fill="none"/></g>
<path d="M10 845.1 L14.2 848.6 L10 852.1 Z" fill="#5a5a5a"/>
<g transform="translate(28,840.0)" stroke="#5a4500" stroke-width="0.8" stroke-linejoin="round"><path d="M0.5 6.5 L4.5 4.2 L4.5 3 L8 1 L13 3.2 L13 8 L16.5 10 L16.5 14.5 L11.5 17.5 L0.5 11.5 Z" fill="#f2c820"/><path d="M4.5 4.2 L8 1 L13 3.2 L9.5 5.5 Z" fill="#fbe37a"/><path d="M9.5 5.5 L13 3.2 L13 8 L9.5 10 Z" fill="#fde98a"/><path d="M9.5 10 L13 8 L16.5 10 L12 12.5 Z" fill="#fbe37a"/><path d="M12 12.5 L16.5 10 L16.5 14.5 L11.5 17.5 Z" fill="#fde98a"/><path d="M0.5 6.5 L4.5 8.5 L4.5 4.2 M4.5 8.5 L9.5 10 M0.5 6.5 L0.5 11.5" fill="none"/></g>
<path d="M7.5 871.1 L15.5 871.1 L11.5 875.1 Z" fill="#5a5a5a"/>
<g transform="translate(28,864.6)" fill="none" stroke="#2e82b8" stroke-width="1.6"><path d="M3 16 V4 A2.5 2.5 0 0 1 8 4 V13 A1.2 1.2 0 0 1 5.5 13 V6"/><path d="M11 16 V4 A2.5 2.5 0 0 1 16 4 V13 A1.2 1.2 0 0 1 13.5 13 V6"/></g>
<g transform="translate(50,888.6)" fill="none" stroke="#b8b8b8" stroke-width="1.5"><path d="M1 16 L9 4 L16 16"/><rect x="7" y="2.5" width="3.5" height="3.5" fill="#f7f7f7" stroke-width="1"/><path d="M10 3 L14 -1"/></g>
<g transform="translate(50,912.6)" fill="none" stroke="#2e6f98" stroke-width="2"><circle cx="8.5" cy="8" r="7.5"/><circle cx="8.5" cy="8" r="3.5"/></g>
<g transform="translate(50,936.6)" fill="none" stroke="#2e6f98" stroke-width="1.6"><path d="M1 16 L9 4 L16 16"/><rect x="7" y="2.5" width="3.5" height="3.5" fill="#f7f7f7" stroke="#222" stroke-width="1"/><path d="M10 3 L14 -1"/></g>
<path d="M61 962 L64 959 L67 962 Z" fill="#2e6f98"/>
<path d="M256 252 L261 247 L266 252" fill="none" stroke="#666" stroke-width="1.6"/>
<path d="M256 948 L261 953 L266 948" fill="none" stroke="#666" stroke-width="1.6"/>
<path d="M14 968 L9 972.5 L14 977" fill="none" stroke="#555" stroke-width="1.6"/>
<path d="M236 968 L241 972.5 L236 977" fill="none" stroke="#555" stroke-width="1.6"/>
</svg>

<div id="btabs" class="a"></div>
<div class="a" style="left:0;top:988px;width:1920px;height:21px;background:#f7f7f7;border-top:1px solid #8e8e8e;border-bottom:1px solid #a0a0a0"></div>
<div class="a" style="left:1917px;top:989px;width:1px;height:19px;background:#8e8e8e"></div>
<div class="a" style="left:1px;top:988px;width:82px;height:20px;background:#a9adc1;border-top:1px solid #111"></div>
<div class="a" style="left:0;top:989px;width:2px;height:19px;background:#8aa8b0"></div>
<div class="a" style="left:172px;top:988px;width:166px;height:20px;background:#d4d4d4;border:1px solid #8e8e8e;border-bottom:none"></div>
<div class="a" style="left:337px;top:988px;width:145px;height:20px;background:#d4d4d4;border:1px solid #8e8e8e;border-bottom:none"></div>
<svg class="a" style="left:0;top:988px" width="90" height="21">
 <g fill="none" stroke="#c6c9d6" stroke-width="0.8"><rect x="2.5" y="1.5" width="17" height="17"/><rect x="22.5" y="1.5" width="17" height="17"/><rect x="42.5" y="1.5" width="17" height="17"/><rect x="62.5" y="1.5" width="17" height="17"/></g>
 <g fill="#8589a0"><rect x="8" y="5" width="1.5" height="10"/><path d="M15 5 L9.5 10 L15 15 Z"/><path d="M34 5 L28 10 L34 15 Z"/><path d="M48 5 L54 10 L48 15 Z"/><path d="M68 5 L73.5 10 L68 15 Z"/><rect x="73.5" y="5" width="1.5" height="10"/></g>
</svg>
<div class="t" style="left:99px;top:991.1px;font-size:15px;color:#111;font-weight:bold;letter-spacing:0.2px">Модель</div>
<div class="t" style="left:190.6px;top:990.8px;font-size:15.15px;color:#1a1a1a;">Трехмерные виды</div>
<div class="t" style="left:351.4px;top:991.4px;font-size:14.4px;color:#1a1a1a;letter-spacing:0.62px">Motion Study 1</div>

<div id="status" class="a"></div>
<div class="t" style="left:1px;top:1014.6px;font-size:13.9px;color:#1a1a1a;">SOLIDWORKS Premium 2024 SP5.0</div>
<div class="t" style="left:1233.3px;top:1013.9px;font-size:14.8px;color:#1a1a1a;">Длина: 29мм</div>
<div class="t" style="left:1332.5px;top:1013.6px;font-size:15.15px;color:#1a1a1a;">Недоопределенный</div>
<div class="t" style="left:1491px;top:1014.0px;font-size:14.6px;color:#1a1a1a;">Редактируется Сборка</div>
<div class="t" style="left:1786.4px;top:1014.3px;font-size:14.35px;color:#1a1a1a;">ММГС</div>
<svg class="a" style="left:1860px;top:1010px" width="60" height="20">
 <path d="M8.5 12 L11.5 9 L14.5 12 Z" fill="#333"/>
 <g transform="translate(41,3) rotate(20 8 7)"><path d="M1 6 L8 2 L15 5 L15 9 L8 13 L1 10 Z" fill="#e8e8e8" stroke="#333" stroke-width="1"/><path d="M1 6 L8 9 L15 5 M8 9 V13" fill="none" stroke="#333" stroke-width="0.8"/><path d="M6 5 L10 6.5" stroke="#333" stroke-width="1.5"/></g>
</svg>

<div id="taskbar" class="a"></div>
<div class="a" style="left:0;top:1030px;width:1920px;height:50px;background:linear-gradient(90deg,#d4d4d4 0px,#d5d5d5 620px,#e6e6e6 880px,#e9e9e9 1100px,#e9e9e9 1550px,#e5e7e9 1700px,#dcdcdc 1820px,#d4d4d4 1900px)"></div>
<div class="a" style="left:61px;top:1031px;width:428px;height:49px;background:#fff"></div>
<div class="a" style="left:1238px;top:1030px;width:57px;height:50px;background:#f3f3f3"></div>
<div class="a" style="left:1295px;top:1030px;width:1px;height:50px;background:#c4c4c4"></div>
<div class="a" style="left:871px;top:1077px;width:44px;height:3px;background:#0a66c2"></div>
<div class="a" style="left:915px;top:1077px;width:7px;height:3px;background:#5c9ad6"></div>
<div class="a" style="left:1238px;top:1077px;width:61px;height:3px;background:#0a66c2"></div>
<div class="a" style="left:1305px;top:1077px;width:50px;height:3px;background:#0a66c2"></div>
<div class="a" style="left:1367px;top:1077px;width:49px;height:3px;background:#0a66c2"></div>
<div class="a" style="left:1914px;top:1030px;width:1px;height:50px;background:#b8b8b8"></div>
<div class="t" style="left:111px;top:1046.3px;font-size:18.6px;color:#1a1a1a;">Чтобы начать поиск, введите здесь запрос</div>
<div class="t" style="left:1732.5px;top:1048.9px;font-size:13.3px;color:#111;">РУС</div>
<div class="t" style="left:1794px;top:1036.9px;font-size:13.6px;color:#111;">11:25</div>
<div class="t" style="left:1776px;top:1059.3px;font-size:13.8px;color:#111;">01.10.2025</div>
<svg class="a" style="left:0;top:1030px" width="1920" height="50">
 <!-- windows -->
 <path d="M20 6.5 L27.5 5.3 V13.5 H20 Z M28.7 5.1 L40 3.3 V13.5 H28.7 Z M20 14.7 H27.5 V23 L20 21.8 Z M28.7 14.7 H40 V25 L28.7 23.2 Z" fill="#111" transform="translate(0,10)"/>
 <!-- search -->
 <circle cx="88" cy="22.5" r="6.3" fill="none" stroke="#111" stroke-width="1.3"/><path d="M83.5 27 L75.5 35" stroke="#111" stroke-width="1.4"/>
 <!-- gaming -->
 <circle cx="523.5" cy="24.5" r="13.5" fill="#151515" stroke="#d81818" stroke-width="1.5"/><circle cx="523.5" cy="24.5" r="6" fill="none" stroke="#e02020" stroke-width="3.5" stroke-dasharray="2.5 1.5"/><path d="M522 26 L528 19 L531 24" fill="none" stroke="#e02020" stroke-width="2"/>
 <!-- anydesk -->
 <rect x="571" y="10.3" width="30" height="29" fill="#ef443b"/><path d="M577 25 L582 20 L587 25 L582 30 Z" fill="#fff"/><path d="M587 20 L592 25 L587 30 L590 30 L595 25 L590 20 Z" fill="#fff"/>
 <!-- file -->
 <rect x="635" y="11" width="26" height="26" rx="4" fill="#e8e8f0" stroke="#5a5ae8" stroke-width="1.3"/><rect x="643" y="11" width="10" height="7" fill="#fff" stroke="#b8b8c8" stroke-width="0.8"/><path d="M640 26 H656 M640 30 H656 M640 34 H656" stroke="#e83838" stroke-width="2.3"/>
 <!-- Ps -->
 <rect x="696" y="10.5" width="27.5" height="26.5" rx="4" fill="#001e36"/><text x="700" y="30" font-family="Liberation Sans" font-weight="bold" font-size="15" fill="#31a8ff">Ps</text>
 <!-- Lrc -->
 <rect x="758.3" y="10.5" width="27.5" height="26.5" rx="4" fill="#001e36"/><text x="760" y="30" font-family="Liberation Sans" font-weight="bold" font-size="13" fill="#31a8ff" textLength="24" lengthAdjust="spacingAndGlyphs">LrC</text>
 <!-- whatsapp -->
 <circle cx="834" cy="24" r="13" fill="#fff" stroke="#1e9a48" stroke-width="2.6"/><path d="M823 38 L825 31 L829 35 Z" fill="#1e9a48"/><path d="M828 19 C828 26 832 30 839 30 L841 27 L838 25 L836 27 C833 26 831 24 830 21 L832 19 L830 16 Z" fill="#1e9a48"/>
 <!-- explorer -->
 <path d="M882 13 H891 L893 15 H909.5 V35 H882 Z" fill="#f3c233"/><rect x="882" y="17" width="27.5" height="18" fill="#ffd75a"/><path d="M889 35 V27 H903 V35 H899 V31 H893 V35 Z" fill="#2a8ad8"/>
 <!-- chrome -->
 <circle cx="957.8" cy="24.7" r="15" fill="#db3236"/><path d="M957.8 24.7 L944.8 17.2 A15 15 0 0 0 950.3 37.7 Z" fill="#3cba54"/><path d="M957.8 24.7 L950.3 37.7 A15 15 0 0 0 972.8 24.7 L957.8 24.7" fill="#f4c20d"/><path d="M957.8 24.7 L972.8 24.7 A15 15 0 0 0 970.8 17.2 Z" fill="#db3236"/><circle cx="957.8" cy="24.7" r="6.5" fill="#fff"/><circle cx="957.8" cy="24.7" r="5" fill="#4285f4"/>
 <!-- camera -->
 <rect x="1004.6" y="10" width="30" height="29" rx="3" fill="#0a5cb8"/><rect x="1009" y="17" width="21" height="15" rx="2" fill="#fff"/><circle cx="1019.6" cy="24.5" r="5" fill="#0a5cb8"/><circle cx="1019.6" cy="24.5" r="2.5" fill="#fff"/>
 <!-- certificate -->
 <path d="M1068 33 L1074 20 L1090 22 L1084 35 Z" fill="#f4e8d8" stroke="#d8b898" stroke-width="0.8"/><path d="M1070 31 L1078 32" stroke="#f0a040" stroke-width="3"/><rect x="1082" y="13" width="15" height="18" fill="#c8dcf0" stroke="#5a8ac8" stroke-width="1"/><circle cx="1089.5" cy="20" r="3.5" fill="#5a3a2a"/><path d="M1084 30 C1085 24 1094 24 1095 30 Z" fill="#e8a040"/>
 <!-- telegram -->
 <circle cx="1143.4" cy="24.7" r="13.5" fill="#2aa3dd"/><path d="M1136 24 L1151 18 L1148 32 L1143 28 L1140 31 L1140 27 Z" fill="#fff"/>
 <!-- dragon -->
 <rect x="1191" y="10" width="30" height="29" rx="2" fill="#8a1a22"/><path d="M1193 22 C1200 12 1212 12 1218 20" fill="none" stroke="#fff" stroke-width="1.8"/><path d="M1199 36 C1200 28 1206 24 1214 28 L1208 31 L1212 34 Z" fill="#fff"/>
 <!-- SW -->
 <path d="M1254 16 L1268 10 L1283 16 V35 L1268 41 L1254 35 Z" fill="#c8202a"/><path d="M1268 10 L1283 16 V35 L1268 41 Z" fill="#9a1820"/><text x="1256" y="31" font-family="Liberation Sans" font-weight="bold" font-size="13" fill="#fff">S</text><text x="1268" y="29" font-family="Liberation Sans" font-weight="bold" font-size="12" fill="#fff">W</text><rect x="1260" y="32" width="23" height="8" fill="#222"/><text x="1261" y="39.5" font-family="Liberation Sans" font-weight="bold" font-size="8" fill="#fff" textLength="21" lengthAdjust="spacingAndGlyphs">2024</text>
 <!-- telegram 2 -->
 <circle cx="1329.4" cy="24.7" r="13.5" fill="#2aa3dd"/><path d="M1322 24 L1337 18 L1334 32 L1329 28 L1326 31 L1326 27 Z" fill="#fff"/><circle cx="1336.7" cy="33" r="8" fill="#888"/><text x="1332.5" y="38" font-family="Liberation Sans" font-size="12" fill="#fff">3</text>
 <!-- cloud -->
 <path d="M1378 32 C1376 26 1384 18 1396 16 C1404 14 1408 18 1406 22 C1404 26 1396 30 1388 32 C1383 33 1379 34 1378 32 Z" fill="#1a6af0"/><path d="M1386 26 C1392 20 1400 18 1404 20 C1400 24 1392 28 1386 26 Z" fill="#fff"/>
 <!-- tray -->
 <path d="M1640 29 L1648 21 L1656 29" fill="none" stroke="#111" stroke-width="1.5"/>
 <g fill="none" stroke="#111" stroke-width="1.3"><path d="M1672 32 A14 14 0 0 1 1686 18"/><path d="M1675.5 32 A10.5 10.5 0 0 1 1686 21.5"/><path d="M1679 32 A7 7 0 0 1 1686 25"/></g><circle cx="1684" cy="32" r="1.3" fill="#111"/>
 <path d="M1698 22 H1702 L1707 17 V33 L1702 28 H1698 Z" fill="none" stroke="#111" stroke-width="1.3"/><path d="M1710 22 A4 4 0 0 1 1710 28 M1713 19 A8 8 0 0 1 1713 31" fill="none" stroke="#111" stroke-width="1.2"/><path d="M1716 16 A11 11 0 0 1 1716 34" fill="none" stroke="#888" stroke-width="1.1"/>
 <path d="M1869 15 H1889 V28 H1876 L1871 33 V28 H1869 Z" fill="#111"/><path d="M1872 19 H1886 M1872 22.5 H1886 M1872 26 H1882" stroke="#fff" stroke-width="1"/>
 <circle cx="1888.4" cy="34" r="9.5" fill="#d8d8d8" stroke="#9a9a9a" stroke-width="1"/><text x="1884" y="39.5" font-family="Liberation Sans" font-size="14" fill="#111">2</text>
</svg>

</body></html>
